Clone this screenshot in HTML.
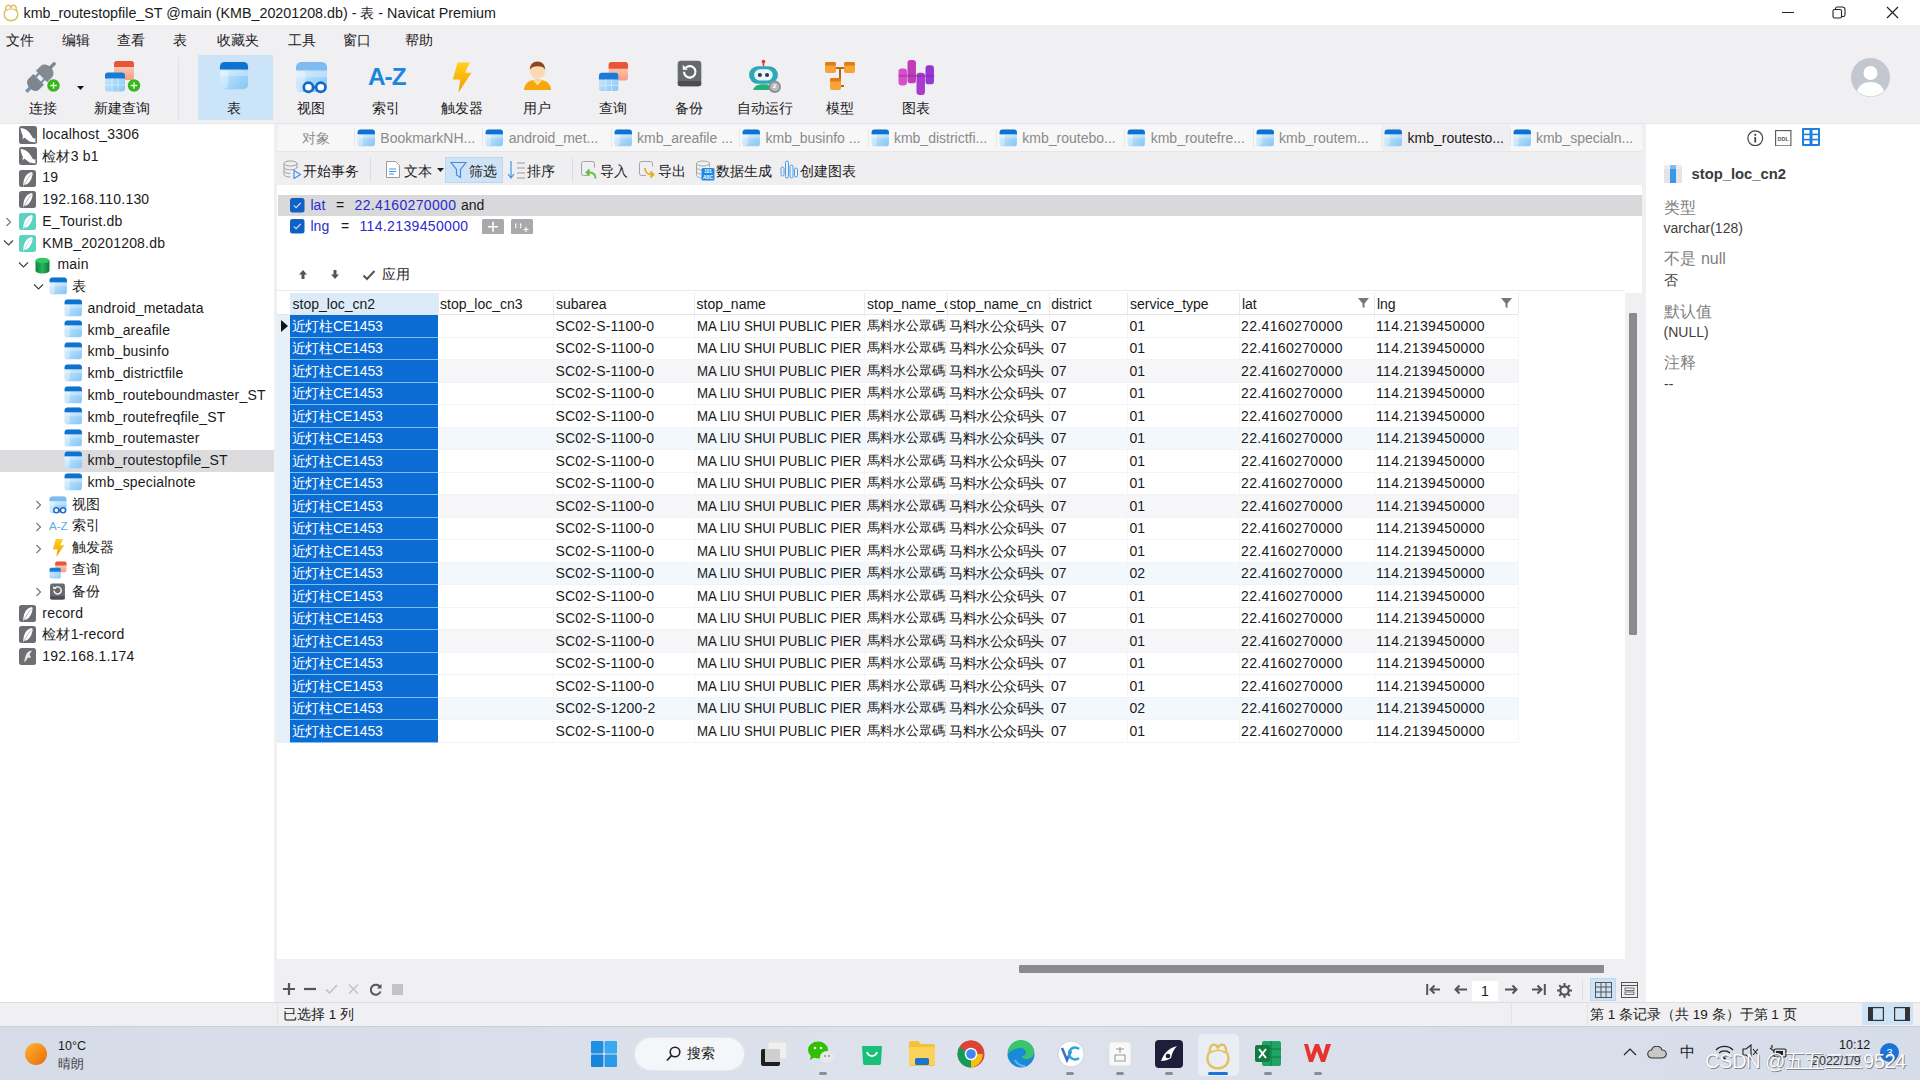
<!DOCTYPE html><html><head><meta charset="utf-8"><title>Navicat</title><style>
html,body{margin:0;padding:0;width:1920px;height:1080px;overflow:hidden;background:#fff}
body{position:relative;font-family:"Liberation Sans",sans-serif}
.t{position:absolute;white-space:nowrap;line-height:1.2}
.b{position:absolute}
</style></head><body><svg width="0" height="0" style="position:absolute"><defs>
<linearGradient id="tgb" x1="0" y1="0" x2="1" y2="1"><stop offset="0" stop-color="#d3edfd"/><stop offset="1" stop-color="#86c6f7"/></linearGradient>
<linearGradient id="tgr" x1="0" y1="0" x2="0" y2="1"><stop offset="0" stop-color="#ffd9c8"/><stop offset="1" stop-color="#f59d80"/></linearGradient>
<linearGradient id="gdb" x1="0" y1="0" x2="1" y2="0"><stop offset="0" stop-color="#0d8a3c"/><stop offset=".5" stop-color="#27b35a"/><stop offset="1" stop-color="#0c7a35"/></linearGradient>
<linearGradient id="bolt" x1="0" y1="0" x2="0" y2="1"><stop offset="0" stop-color="#ffd21a"/><stop offset="1" stop-color="#f59a00"/></linearGradient>
<linearGradient id="sun" x1="0" y1="0" x2="1" y2="1"><stop offset="0" stop-color="#ffb52e"/><stop offset="1" stop-color="#e86a0a"/></linearGradient>
<linearGradient id="tbar" x1="0" y1="0" x2="1" y2="0"><stop offset="0" stop-color="#d8dfec"/><stop offset=".5" stop-color="#dde3ee"/><stop offset="1" stop-color="#d6dde9"/></linearGradient>
</defs></svg><div class="b" style="left:0px;top:0px;width:1920px;height:25px;background:#ffffff;"></div>
<svg class="b" style="left:2px;top:1px" width="18" height="21" viewBox="0 0 18 21"><path d="M9 19.6C5 19.6 2.2 16.9 2.2 13.3C2.2 11.3 2.9 9.7 3.9 8.6C3.4 6.5 4.4 4.5 6.3 4.3C7.8 4.2 8.7 5.4 9 6.7C9.3 5.4 10.2 4.2 11.7 4.3C13.6 4.5 14.6 6.5 14.1 8.6C15.1 9.7 15.8 11.3 15.8 13.3C15.8 16.9 13 19.6 9 19.6Z" fill="none" stroke="#e0c068" stroke-width="1.6"/><path d="M4.2 9.5C5.8 8.3 7.3 7.9 9 7.9S12.2 8.3 13.8 9.5" fill="none" stroke="#e0c068" stroke-width="1.2"/></svg>
<div class="t" style="left:23.5px;top:5px;font-size:14.3px;color:#1a1a1a;">kmb_routestopfile_ST @main (KMB_20201208.db) - 表 - Navicat Premium</div>
<div class="b" style="left:1782px;top:12px;width:11.5px;height:1.2px;background:#222;"></div>
<svg class="b" style="left:1832px;top:6px" width="14" height="13" viewBox="0 0 14 13"><rect x="1" y="3.5" width="8.5" height="8.5" rx="1.5" fill="none" stroke="#222" stroke-width="1.1"/><path d="M3.5 3.3V2.8A1.8 1.8 0 0 1 5.3 1h5.2A2.5 2.5 0 0 1 13 3.5v5.2a1.8 1.8 0 0 1-1.8 1.8H10" fill="none" stroke="#222" stroke-width="1.1"/></svg>
<svg class="b" style="left:1886px;top:6px" width="13" height="13" viewBox="0 0 13 13"><path d="M1 1L12 12M12 1L1 12" stroke="#222" stroke-width="1.2"/></svg>
<div class="b" style="left:0px;top:25px;width:1920px;height:98.6px;background:#f0eff2;"></div>
<div class="t" style="left:6px;top:32.5px;font-size:13.5px;color:#1a1a1a;">文件</div>
<div class="t" style="left:61.5px;top:32.5px;font-size:13.5px;color:#1a1a1a;">编辑</div>
<div class="t" style="left:116.5px;top:32.5px;font-size:13.5px;color:#1a1a1a;">查看</div>
<div class="t" style="left:173px;top:32.5px;font-size:13.5px;color:#1a1a1a;">表</div>
<div class="t" style="left:216.5px;top:32.5px;font-size:13.5px;color:#1a1a1a;">收藏夹</div>
<div class="t" style="left:288px;top:32.5px;font-size:13.5px;color:#1a1a1a;">工具</div>
<div class="t" style="left:343px;top:32.5px;font-size:13.5px;color:#1a1a1a;">窗口</div>
<div class="t" style="left:405px;top:32.5px;font-size:13.5px;color:#1a1a1a;">帮助</div>
<div class="b" style="left:197.5px;top:55px;width:75px;height:65px;background:#cce4f7;"></div>
<div class="b" style="left:178px;top:57px;width:1px;height:63px;background:#e2e1e5;"></div>
<div class="b" style="left:0px;top:122.6px;width:1920px;height:1px;background:#e6e6e9;"></div>
<div class="t" style="left:28.7px;top:100.5px;font-size:13.5px;color:#1a1a1a;">连接</div>
<div class="t" style="left:94.2px;top:100.5px;font-size:13.5px;color:#1a1a1a;">新建查询</div>
<div class="t" style="left:227.2px;top:100.5px;font-size:13.5px;color:#1a1a1a;">表</div>
<div class="t" style="left:296.7px;top:100.5px;font-size:13.5px;color:#1a1a1a;">视图</div>
<div class="t" style="left:372.2px;top:100.5px;font-size:13.5px;color:#1a1a1a;">索引</div>
<div class="t" style="left:441.2px;top:100.5px;font-size:13.5px;color:#1a1a1a;">触发器</div>
<div class="t" style="left:522.7px;top:100.5px;font-size:13.5px;color:#1a1a1a;">用户</div>
<div class="t" style="left:599.2px;top:100.5px;font-size:13.5px;color:#1a1a1a;">查询</div>
<div class="t" style="left:674.7px;top:100.5px;font-size:13.5px;color:#1a1a1a;">备份</div>
<div class="t" style="left:737.2px;top:100.5px;font-size:13.5px;color:#1a1a1a;">自动运行</div>
<div class="t" style="left:826.2px;top:100.5px;font-size:13.5px;color:#1a1a1a;">模型</div>
<div class="t" style="left:902.2px;top:100.5px;font-size:13.5px;color:#1a1a1a;">图表</div>
<svg class="b" style="left:22px;top:56px" width="40" height="40" viewBox="0 0 40 40"><g transform="rotate(-45 19.5 20.5)"><rect x="-2" y="18.8" width="8" height="3.4" fill="#6a9bb8"/><path d="M8 13h7.5v15H8a5 7.5 0 0 1 0-15z" fill="#80848c"/><rect x="15" y="15.3" width="5" height="2.4" fill="#6a9bb8"/><rect x="15" y="23.3" width="5" height="2.4" fill="#6a9bb8"/><path d="M19.5 12.5h7a6 8 0 0 1 0 16h-7z" fill="#858991"/><rect x="31" y="18.8" width="8" height="3.4" rx="1" fill="#80848c"/></g><circle cx="31.5" cy="29.5" r="6.2" fill="#36b51e"/><path d="M28.2 29.5h6.6M31.5 26.2v6.6" stroke="#dfffd0" stroke-width="1.4"/></svg>
<svg class="b" style="left:77px;top:86px" width="7" height="4" viewBox="0 0 7 4"><path d="M0 0h7L3.5 4z" fill="#111"/></svg>
<svg class="b" style="left:104px;top:60px" width="38" height="34" viewBox="0 0 38 34"><rect x="10" y="1" width="20" height="19" rx="3" fill="url(#tgr)"/><path d="M10 7V4a3 3 0 0 1 3-3h14a3 3 0 0 1 3 3v3z" fill="#e8553a"/><rect x="1" y="12.5" width="20" height="19" rx="3" fill="url(#tgb)"/><path d="M1 18.5v-3a3 3 0 0 1 3-3h14a3 3 0 0 1 3 3v3z" fill="#1a7bd6"/><path d="M1 25H21M8 18V31.5M14 18V31.5" stroke="#fff" stroke-opacity=".45"/><circle cx="30" cy="25.5" r="6.2" fill="#36b51e"/><path d="M26.7 25.5h6.6M30 22.2v6.6" stroke="#dfffd0" stroke-width="1.4"/></svg>
<svg class="b" style="left:219px;top:61px" width="30" height="30" viewBox="0 0 32 32"><rect x="1" y="1" width="30" height="29" rx="5" fill="url(#tgb)"/><path d="M1 16V10H31V16z" fill="#ffffff" fill-opacity=".28"/><path d="M1 10H10V25a5 5 0 0 1-4 4.5A5 5 0 0 1 1 25z" fill="#ffffff" fill-opacity=".35"/><path d="M1 9V6a5 5 0 0 1 5-5h20a5 5 0 0 1 5 5v3z" fill="#0f72cf"/></svg>
<svg class="b" style="left:295px;top:61px" width="33" height="33" viewBox="0 0 32 32"><rect x="1" y="1" width="30" height="29" rx="5" fill="url(#tgb)"/><path d="M1 16V10H31V16z" fill="#ffffff" fill-opacity=".28"/><path d="M1 10H10V25a5 5 0 0 1-4 4.5A5 5 0 0 1 1 25z" fill="#ffffff" fill-opacity=".35"/><path d="M1 9V6a5 5 0 0 1 5-5h20a5 5 0 0 1 5 5v3z" fill="#7fbaf0"/><circle cx="13" cy="25.5" r="4.5" fill="#fff" stroke="#1569c7" stroke-width="2.6"/><circle cx="25" cy="25.5" r="4.5" fill="#fff" stroke="#1569c7" stroke-width="2.6"/><path d="M17.5 25.5h3" stroke="#1569c7" stroke-width="2.6"/></svg>
<div class="t" style="left:368px;top:67px;font-size:24.3px;line-height:19px;color:#1b86df;font-weight:bold;letter-spacing:-1px">A-Z</div>
<svg class="b" style="left:450px;top:61.5px" width="22.5" height="31" viewBox="0 0 24 32"><path d="M8 0H21L16 11H23L9 32L11 18H3Z" fill="url(#bolt)"/></svg>
<svg class="b" style="left:522px;top:60px" width="31" height="31" viewBox="0 0 32 32"><path d="M2 31c0-7 6-11 14-11s14 4 14 11z" fill="#f5a70c"/><path d="M11 21l5 5 5-5" fill="#ffe0a0"/><circle cx="16" cy="11" r="8" fill="#fcd9b6"/><path d="M8 10c0-5 3.5-8.5 8-8.5s8 3.5 8 8.5c-1.5-2.5-4-3.5-8-3.5-3.5 0-6 1-8 3.5z" fill="#8a4a1c"/></svg>
<svg class="b" style="left:598px;top:61px" width="31" height="31" viewBox="0 0 32 32"><rect x="11" y="1" width="20" height="19" rx="3" fill="url(#tgr)"/><path d="M11 8V4a3 3 0 0 1 3-3h14a3 3 0 0 1 3 3v4z" fill="#e8553a"/><rect x="1" y="12" width="20" height="19" rx="3" fill="url(#tgb)"/><path d="M1 19v-4a3 3 0 0 1 3-3h14a3 3 0 0 1 3 3v4z" fill="#1a7bd6"/><path d="M1 25H21M8 19V31M14 19V31" stroke="#fff" stroke-opacity=".45" stroke-width="1"/></svg>
<svg class="b" style="left:676px;top:60px" width="27" height="27" viewBox="0 0 32 32"><rect x="2" y="1" width="28" height="30" rx="4" fill="#66696e"/><rect x="2" y="25" width="28" height="6" rx="3" fill="#4b4d52"/><path d="M9.5 14a6.8 6.8 0 1 0 2.2-5" stroke="#fff" stroke-width="2.6" fill="none"/><path d="M8 5.5v6h6z" fill="#fff"/></svg>
<svg class="b" style="left:747px;top:59px" width="35" height="35" viewBox="0 0 34 34"><path d="M16 2v5" stroke="#d9353a" stroke-width="1.5"/><circle cx="16" cy="2.5" r="1.8" fill="#e53935"/><rect x="2" y="7" width="28" height="17" rx="8.5" fill="#2fa7b9"/><rect x="7" y="10" width="18" height="11" rx="5.5" fill="#e8f6f8"/><circle cx="12.5" cy="15.5" r="2" fill="#2b3a55"/><circle cx="19.5" cy="15.5" r="2" fill="#2b3a55"/><path d="M6 30c1-4 5-5.5 10-5.5s9 1.5 10 5.5z" fill="#21b07a"/><circle cx="27" cy="27" r="6" fill="#8d9096"/><circle cx="27" cy="27" r="4.2" fill="#b9bcc1"/><path d="M27 24.5v3h-2" stroke="#fff" stroke-width="1.3" fill="none"/></svg>
<svg class="b" style="left:824px;top:60px" width="32" height="32" viewBox="0 0 32 32"><path d="M10 8h10M16 8v18h4" stroke="#b8661a" stroke-width="2" fill="none"/><rect x="1" y="2" width="11" height="11" rx="2" fill="#f7a33a"/><rect x="1" y="2" width="11" height="3.5" rx="1.5" fill="#e07b12"/><rect x="20" y="2" width="11" height="11" rx="2" fill="#f7a33a"/><rect x="20" y="2" width="11" height="3.5" rx="1.5" fill="#e07b12"/><rect x="6" y="18" width="11" height="12" rx="2" fill="#f7a33a"/><rect x="6" y="18" width="11" height="3.5" rx="1.5" fill="#e07b12"/></svg>
<svg class="b" style="left:897px;top:59px" width="39" height="37" viewBox="0 0 36 35"><rect x="1" y="9" width="8" height="16" rx="3" fill="#d94fc8"/><rect x="9.5" y="1" width="8" height="22" rx="3" fill="#c13cb7"/><rect x="18" y="13" width="8" height="21" rx="3" fill="#a93ad0"/><rect x="26.5" y="6" width="8" height="18" rx="3" fill="#9636d6"/><path d="M1 16h34" stroke="#7a1f9c" stroke-opacity=".35" stroke-width="2"/></svg>
<svg class="b" style="left:1851px;top:58px" width="39" height="39" viewBox="0 0 39 39"><circle cx="19.5" cy="19.5" r="19.5" fill="#c3c7cf"/><circle cx="19.5" cy="15" r="7" fill="#fff"/><path d="M6 33c2-6 7-9 13.5-9s11.5 3 13.5 9a19.5 19.5 0 0 1-27 0z" fill="#fff"/></svg>
<div class="b" style="left:0px;top:123.6px;width:274px;height:878.4px;background:#ffffff;"></div>
<div class="b" style="left:274px;top:123.6px;width:3px;height:878.4px;background:#f0eff2;"></div>
<svg class="b" style="left:19px;top:125.5px" width="18" height="18" viewBox="0 0 18 18"><rect x="0" y="0" width="18" height="18" rx="2.5" fill="#6d6d71"/><path d="M1.5 2C5.5 2.3 9.5 4.6 11.6 8.2C12.6 10 13.6 11.8 15 12.6L17 12.4L16 14.2L17 16C14.2 16.5 11.5 16.2 9.4 14.8C7.8 13.7 6.6 12.4 5.4 11.6L3.6 13.4L3.8 9.6C2.6 7.4 1.8 4.8 1.5 2Z" fill="#ffffff"/></svg>
<div class="t" style="left:42.3px;top:125.8px;font-size:14px;color:#1a1a1a;letter-spacing:0.2px">localhost_3306</div>
<svg class="b" style="left:19px;top:147.26px" width="18" height="18" viewBox="0 0 18 18"><rect x="0" y="0" width="18" height="18" rx="2.5" fill="#6d6d71"/><path d="M1.5 2C5.5 2.3 9.5 4.6 11.6 8.2C12.6 10 13.6 11.8 15 12.6L17 12.4L16 14.2L17 16C14.2 16.5 11.5 16.2 9.4 14.8C7.8 13.7 6.6 12.4 5.4 11.6L3.6 13.4L3.8 9.6C2.6 7.4 1.8 4.8 1.5 2Z" fill="#ffffff"/></svg>
<div class="t" style="left:42.3px;top:147.55999999999997px;font-size:14px;color:#1a1a1a;letter-spacing:0.2px">检材3 b1</div>
<svg class="b" style="left:19px;top:169.52px" width="17" height="17" viewBox="0 0 17 17"><rect x="0" y="0" width="17" height="17" rx="2.5" fill="#6d6d71"/><path d="M4.6 16.8C3.8 12.5 5 7.2 8.8 3.8C10.4 2.4 12.4 1.9 13.4 2.4C14 4.5 12.8 9 10.2 12.2C8.7 14 6.8 14.8 5.2 15.1Z" fill="#ffffff"/><path d="M5 15.8C6.8 11 9.2 7.2 12.4 4" stroke="#6d6d71" stroke-width=".8" stroke-opacity=".6" fill="none"/></svg>
<div class="t" style="left:42.3px;top:169.32px;font-size:14px;color:#1a1a1a;letter-spacing:0.2px">19</div>
<svg class="b" style="left:19px;top:191.28px" width="17" height="17" viewBox="0 0 17 17"><rect x="0" y="0" width="17" height="17" rx="2.5" fill="#6d6d71"/><path d="M4.6 16.8C3.8 12.5 5 7.2 8.8 3.8C10.4 2.4 12.4 1.9 13.4 2.4C14 4.5 12.8 9 10.2 12.2C8.7 14 6.8 14.8 5.2 15.1Z" fill="#ffffff"/><path d="M5 15.8C6.8 11 9.2 7.2 12.4 4" stroke="#6d6d71" stroke-width=".8" stroke-opacity=".6" fill="none"/></svg>
<div class="t" style="left:42.3px;top:191.07999999999998px;font-size:14px;color:#1a1a1a;letter-spacing:0.2px">192.168.110.130</div>
<svg class="b" style="left:19px;top:213.04px" width="17" height="17" viewBox="0 0 17 17"><rect x="0" y="0" width="17" height="17" rx="2.5" fill="#5cd2c0"/><path d="M4.6 16.8C3.8 12.5 5 7.2 8.8 3.8C10.4 2.4 12.4 1.9 13.4 2.4C14 4.5 12.8 9 10.2 12.2C8.7 14 6.8 14.8 5.2 15.1Z" fill="#ffffff"/><path d="M5 15.8C6.8 11 9.2 7.2 12.4 4" stroke="#5cd2c0" stroke-width=".8" stroke-opacity=".6" fill="none"/></svg>
<svg class="b" style="left:4px;top:217.14px" width="9" height="10" viewBox="0 0 9 10"><path d="M2.5 1l4 4-4 4" stroke="#7a7a7a" stroke-width="1.2" fill="none"/></svg>
<div class="t" style="left:42.3px;top:212.83999999999997px;font-size:14px;color:#1a1a1a;letter-spacing:0.2px">E_Tourist.db</div>
<svg class="b" style="left:19px;top:234.8px" width="17" height="17" viewBox="0 0 17 17"><rect x="0" y="0" width="17" height="17" rx="2.5" fill="#5cd2c0"/><path d="M4.6 16.8C3.8 12.5 5 7.2 8.8 3.8C10.4 2.4 12.4 1.9 13.4 2.4C14 4.5 12.8 9 10.2 12.2C8.7 14 6.8 14.8 5.2 15.1Z" fill="#ffffff"/><path d="M5 15.8C6.8 11 9.2 7.2 12.4 4" stroke="#5cd2c0" stroke-width=".8" stroke-opacity=".6" fill="none"/></svg>
<svg class="b" style="left:3px;top:239.4px" width="11" height="8" viewBox="0 0 11 8"><path d="M1 1.5l4.5 4.5 4.5-4.5" stroke="#444" stroke-width="1.2" fill="none"/></svg>
<div class="t" style="left:42.3px;top:234.6px;font-size:14px;color:#1a1a1a;letter-spacing:0.2px">KMB_20201208.db</div>
<svg class="b" style="left:34px;top:256.56px" width="17" height="17" viewBox="0 0 17 17"><path d="M1.5 3.5v10c0 1.7 3.1 3 7 3s7-1.3 7-3v-10z" fill="url(#gdb)"/><ellipse cx="8.5" cy="3.5" rx="7" ry="2.8" fill="#34c46a"/></svg>
<svg class="b" style="left:18px;top:261.15999999999997px" width="11" height="8" viewBox="0 0 11 8"><path d="M1 1.5l4.5 4.5 4.5-4.5" stroke="#444" stroke-width="1.2" fill="none"/></svg>
<div class="t" style="left:57.5px;top:256.36px;font-size:14px;color:#1a1a1a;letter-spacing:0.2px">main</div>
<svg class="b" style="left:48.5px;top:276.82px" width="18.5" height="18.5" viewBox="0 0 32 32"><rect x="1" y="1" width="30" height="29" rx="5" fill="url(#tgb)"/><path d="M1 16V10H31V16z" fill="#ffffff" fill-opacity=".28"/><path d="M1 10H10V25a5 5 0 0 1-4 4.5A5 5 0 0 1 1 25z" fill="#ffffff" fill-opacity=".35"/><path d="M1 9V6a5 5 0 0 1 5-5h20a5 5 0 0 1 5 5v3z" fill="#0f72cf"/></svg>
<svg class="b" style="left:33px;top:282.92px" width="11" height="8" viewBox="0 0 11 8"><path d="M1 1.5l4.5 4.5 4.5-4.5" stroke="#444" stroke-width="1.2" fill="none"/></svg>
<div class="t" style="left:72px;top:278.12px;font-size:14px;color:#1a1a1a;letter-spacing:0.2px">表</div>
<svg class="b" style="left:63.8px;top:298.58px" width="18.5" height="18.5" viewBox="0 0 32 32"><rect x="1" y="1" width="30" height="29" rx="5" fill="url(#tgb)"/><path d="M1 16V10H31V16z" fill="#ffffff" fill-opacity=".28"/><path d="M1 10H10V25a5 5 0 0 1-4 4.5A5 5 0 0 1 1 25z" fill="#ffffff" fill-opacity=".35"/><path d="M1 9V6a5 5 0 0 1 5-5h20a5 5 0 0 1 5 5v3z" fill="#0f72cf"/></svg>
<div class="t" style="left:87.6px;top:299.88px;font-size:14px;color:#1a1a1a;letter-spacing:0.2px">android_metadata</div>
<svg class="b" style="left:63.8px;top:320.34px" width="18.5" height="18.5" viewBox="0 0 32 32"><rect x="1" y="1" width="30" height="29" rx="5" fill="url(#tgb)"/><path d="M1 16V10H31V16z" fill="#ffffff" fill-opacity=".28"/><path d="M1 10H10V25a5 5 0 0 1-4 4.5A5 5 0 0 1 1 25z" fill="#ffffff" fill-opacity=".35"/><path d="M1 9V6a5 5 0 0 1 5-5h20a5 5 0 0 1 5 5v3z" fill="#0f72cf"/></svg>
<div class="t" style="left:87.6px;top:321.64px;font-size:14px;color:#1a1a1a;letter-spacing:0.2px">kmb_areafile</div>
<svg class="b" style="left:63.8px;top:342.1px" width="18.5" height="18.5" viewBox="0 0 32 32"><rect x="1" y="1" width="30" height="29" rx="5" fill="url(#tgb)"/><path d="M1 16V10H31V16z" fill="#ffffff" fill-opacity=".28"/><path d="M1 10H10V25a5 5 0 0 1-4 4.5A5 5 0 0 1 1 25z" fill="#ffffff" fill-opacity=".35"/><path d="M1 9V6a5 5 0 0 1 5-5h20a5 5 0 0 1 5 5v3z" fill="#0f72cf"/></svg>
<div class="t" style="left:87.6px;top:343.40000000000003px;font-size:14px;color:#1a1a1a;letter-spacing:0.2px">kmb_businfo</div>
<svg class="b" style="left:63.8px;top:363.86px" width="18.5" height="18.5" viewBox="0 0 32 32"><rect x="1" y="1" width="30" height="29" rx="5" fill="url(#tgb)"/><path d="M1 16V10H31V16z" fill="#ffffff" fill-opacity=".28"/><path d="M1 10H10V25a5 5 0 0 1-4 4.5A5 5 0 0 1 1 25z" fill="#ffffff" fill-opacity=".35"/><path d="M1 9V6a5 5 0 0 1 5-5h20a5 5 0 0 1 5 5v3z" fill="#0f72cf"/></svg>
<div class="t" style="left:87.6px;top:365.16px;font-size:14px;color:#1a1a1a;letter-spacing:0.2px">kmb_districtfile</div>
<svg class="b" style="left:63.8px;top:385.62px" width="18.5" height="18.5" viewBox="0 0 32 32"><rect x="1" y="1" width="30" height="29" rx="5" fill="url(#tgb)"/><path d="M1 16V10H31V16z" fill="#ffffff" fill-opacity=".28"/><path d="M1 10H10V25a5 5 0 0 1-4 4.5A5 5 0 0 1 1 25z" fill="#ffffff" fill-opacity=".35"/><path d="M1 9V6a5 5 0 0 1 5-5h20a5 5 0 0 1 5 5v3z" fill="#0f72cf"/></svg>
<div class="t" style="left:87.6px;top:386.92px;font-size:14px;color:#1a1a1a;letter-spacing:0.2px">kmb_routeboundmaster_ST</div>
<svg class="b" style="left:63.8px;top:407.38px" width="18.5" height="18.5" viewBox="0 0 32 32"><rect x="1" y="1" width="30" height="29" rx="5" fill="url(#tgb)"/><path d="M1 16V10H31V16z" fill="#ffffff" fill-opacity=".28"/><path d="M1 10H10V25a5 5 0 0 1-4 4.5A5 5 0 0 1 1 25z" fill="#ffffff" fill-opacity=".35"/><path d="M1 9V6a5 5 0 0 1 5-5h20a5 5 0 0 1 5 5v3z" fill="#0f72cf"/></svg>
<div class="t" style="left:87.6px;top:408.68px;font-size:14px;color:#1a1a1a;letter-spacing:0.2px">kmb_routefreqfile_ST</div>
<svg class="b" style="left:63.8px;top:429.14px" width="18.5" height="18.5" viewBox="0 0 32 32"><rect x="1" y="1" width="30" height="29" rx="5" fill="url(#tgb)"/><path d="M1 16V10H31V16z" fill="#ffffff" fill-opacity=".28"/><path d="M1 10H10V25a5 5 0 0 1-4 4.5A5 5 0 0 1 1 25z" fill="#ffffff" fill-opacity=".35"/><path d="M1 9V6a5 5 0 0 1 5-5h20a5 5 0 0 1 5 5v3z" fill="#0f72cf"/></svg>
<div class="t" style="left:87.6px;top:430.44px;font-size:14px;color:#1a1a1a;letter-spacing:0.2px">kmb_routemaster</div>
<div class="b" style="left:0px;top:450.0px;width:274px;height:21.76px;background:#dcdcde;"></div>
<svg class="b" style="left:63.8px;top:450.9px" width="18.5" height="18.5" viewBox="0 0 32 32"><rect x="1" y="1" width="30" height="29" rx="5" fill="url(#tgb)"/><path d="M1 16V10H31V16z" fill="#ffffff" fill-opacity=".28"/><path d="M1 10H10V25a5 5 0 0 1-4 4.5A5 5 0 0 1 1 25z" fill="#ffffff" fill-opacity=".35"/><path d="M1 9V6a5 5 0 0 1 5-5h20a5 5 0 0 1 5 5v3z" fill="#0f72cf"/></svg>
<div class="t" style="left:87.6px;top:452.2px;font-size:14px;color:#1a1a1a;letter-spacing:0.2px">kmb_routestopfile_ST</div>
<svg class="b" style="left:63.8px;top:472.65999999999997px" width="18.5" height="18.5" viewBox="0 0 32 32"><rect x="1" y="1" width="30" height="29" rx="5" fill="url(#tgb)"/><path d="M1 16V10H31V16z" fill="#ffffff" fill-opacity=".28"/><path d="M1 10H10V25a5 5 0 0 1-4 4.5A5 5 0 0 1 1 25z" fill="#ffffff" fill-opacity=".35"/><path d="M1 9V6a5 5 0 0 1 5-5h20a5 5 0 0 1 5 5v3z" fill="#0f72cf"/></svg>
<div class="t" style="left:87.6px;top:473.96px;font-size:14px;color:#1a1a1a;letter-spacing:0.2px">kmb_specialnote</div>
<svg class="b" style="left:49px;top:495.91999999999996px" width="18" height="18" viewBox="0 0 32 32"><rect x="1" y="1" width="30" height="29" rx="5" fill="url(#tgb)"/><path d="M1 16V10H31V16z" fill="#ffffff" fill-opacity=".28"/><path d="M1 10H10V25a5 5 0 0 1-4 4.5A5 5 0 0 1 1 25z" fill="#ffffff" fill-opacity=".35"/><path d="M1 9V6a5 5 0 0 1 5-5h20a5 5 0 0 1 5 5v3z" fill="#7fbaf0"/><circle cx="13" cy="25.5" r="4.5" fill="#fff" stroke="#1569c7" stroke-width="2.6"/><circle cx="25" cy="25.5" r="4.5" fill="#fff" stroke="#1569c7" stroke-width="2.6"/><path d="M17.5 25.5h3" stroke="#1569c7" stroke-width="2.6"/></svg>
<svg class="b" style="left:34px;top:500.02px" width="9" height="10" viewBox="0 0 9 10"><path d="M2.5 1l4 4-4 4" stroke="#7a7a7a" stroke-width="1.2" fill="none"/></svg>
<div class="t" style="left:72px;top:495.71999999999997px;font-size:14px;color:#1a1a1a;letter-spacing:0.2px">视图</div>
<div class="t" style="left:49px;top:519.68px;font-size:11.5px;line-height:13px;color:#5aaae8">A-Z</div>
<svg class="b" style="left:34px;top:521.78px" width="9" height="10" viewBox="0 0 9 10"><path d="M2.5 1l4 4-4 4" stroke="#7a7a7a" stroke-width="1.2" fill="none"/></svg>
<div class="t" style="left:72px;top:517.48px;font-size:14px;color:#1a1a1a;letter-spacing:0.2px">索引</div>
<svg class="b" style="left:51px;top:538.94px" width="14" height="18" viewBox="0 0 24 32"><path d="M8 0H21L16 11H23L9 32L11 18H3Z" fill="url(#bolt)"/></svg>
<svg class="b" style="left:34px;top:543.5400000000001px" width="9" height="10" viewBox="0 0 9 10"><path d="M2.5 1l4 4-4 4" stroke="#7a7a7a" stroke-width="1.2" fill="none"/></svg>
<div class="t" style="left:72px;top:539.2400000000001px;font-size:14px;color:#1a1a1a;letter-spacing:0.2px">触发器</div>
<svg class="b" style="left:49px;top:561.2px" width="18" height="18" viewBox="0 0 32 32"><rect x="11" y="1" width="20" height="19" rx="3" fill="url(#tgr)"/><path d="M11 8V4a3 3 0 0 1 3-3h14a3 3 0 0 1 3 3v4z" fill="#e8553a"/><rect x="1" y="12" width="20" height="19" rx="3" fill="url(#tgb)"/><path d="M1 19v-4a3 3 0 0 1 3-3h14a3 3 0 0 1 3 3v4z" fill="#1a7bd6"/><path d="M1 25H21M8 19V31M14 19V31" stroke="#fff" stroke-opacity=".45" stroke-width="1"/></svg>
<div class="t" style="left:72px;top:561.0000000000001px;font-size:14px;color:#1a1a1a;letter-spacing:0.2px">查询</div>
<svg class="b" style="left:49px;top:582.96px" width="17" height="17" viewBox="0 0 32 32"><rect x="2" y="1" width="28" height="30" rx="4" fill="#66696e"/><rect x="2" y="25" width="28" height="6" rx="3" fill="#4b4d52"/><path d="M9.5 14a6.8 6.8 0 1 0 2.2-5" stroke="#fff" stroke-width="2.6" fill="none"/><path d="M8 5.5v6h6z" fill="#fff"/></svg>
<svg class="b" style="left:34px;top:587.0600000000001px" width="9" height="10" viewBox="0 0 9 10"><path d="M2.5 1l4 4-4 4" stroke="#7a7a7a" stroke-width="1.2" fill="none"/></svg>
<div class="t" style="left:72px;top:582.7600000000001px;font-size:14px;color:#1a1a1a;letter-spacing:0.2px">备份</div>
<svg class="b" style="left:19px;top:604.72px" width="17" height="17" viewBox="0 0 17 17"><rect x="0" y="0" width="17" height="17" rx="2.5" fill="#6d6d71"/><path d="M4.6 16.8C3.8 12.5 5 7.2 8.8 3.8C10.4 2.4 12.4 1.9 13.4 2.4C14 4.5 12.8 9 10.2 12.2C8.7 14 6.8 14.8 5.2 15.1Z" fill="#ffffff"/><path d="M5 15.8C6.8 11 9.2 7.2 12.4 4" stroke="#6d6d71" stroke-width=".8" stroke-opacity=".6" fill="none"/></svg>
<div class="t" style="left:42.3px;top:604.5200000000001px;font-size:14px;color:#1a1a1a;letter-spacing:0.2px">record</div>
<svg class="b" style="left:19px;top:626.48px" width="17" height="17" viewBox="0 0 17 17"><rect x="0" y="0" width="17" height="17" rx="2.5" fill="#6d6d71"/><path d="M4.6 16.8C3.8 12.5 5 7.2 8.8 3.8C10.4 2.4 12.4 1.9 13.4 2.4C14 4.5 12.8 9 10.2 12.2C8.7 14 6.8 14.8 5.2 15.1Z" fill="#ffffff"/><path d="M5 15.8C6.8 11 9.2 7.2 12.4 4" stroke="#6d6d71" stroke-width=".8" stroke-opacity=".6" fill="none"/></svg>
<div class="t" style="left:42.3px;top:626.2800000000001px;font-size:14px;color:#1a1a1a;letter-spacing:0.2px">检材1-record</div>
<svg class="b" style="left:19px;top:648.24px" width="17" height="17" viewBox="0 0 17 17"><rect x="0" y="0" width="17" height="17" rx="2.5" fill="#6f6f73"/><path d="M5 14c1-3 1-6 3-9 1.5-2 4-2.5 5-2-1 1-2 2-2.5 4 1 .5 1.5 1.5 1 3-1.5-1-3-.5-3.5 1-.5 1.2-1 2.2-3 3z" fill="#e8e8e8"/></svg>
<div class="t" style="left:42.3px;top:648.0400000000001px;font-size:14px;color:#1a1a1a;letter-spacing:0.2px">192.168.1.174</div>
<div class="b" style="left:277px;top:123.6px;width:1368px;height:28px;background:#f0eff2;"></div>
<div class="b" style="left:278px;top:124.5px;width:1364px;height:26.5px;background:#f7f7f8;"></div>
<div class="t" style="left:302px;top:130.5px;font-size:13.5px;color:#8c8c8c;">对象</div>
<div class="b" style="left:354.0px;top:128px;width:1px;height:19px;background:#e8e8ea;"></div>
<svg class="b" style="left:357.0px;top:128.5px" width="18.5" height="18.5" viewBox="0 0 32 32"><rect x="1" y="1" width="30" height="29" rx="5" fill="url(#tgb)"/><path d="M1 16V10H31V16z" fill="#ffffff" fill-opacity=".28"/><path d="M1 10H10V25a5 5 0 0 1-4 4.5A5 5 0 0 1 1 25z" fill="#ffffff" fill-opacity=".35"/><path d="M1 9V6a5 5 0 0 1 5-5h20a5 5 0 0 1 5 5v3z" fill="#0f72cf"/></svg>
<div class="t" style="left:380.3px;top:129.5px;font-size:14px;color:#8a8a8a;letter-spacing:0px">BookmarkNH...</div>
<div class="b" style="left:482.4px;top:128px;width:1px;height:19px;background:#e8e8ea;"></div>
<svg class="b" style="left:485.4px;top:128.5px" width="18.5" height="18.5" viewBox="0 0 32 32"><rect x="1" y="1" width="30" height="29" rx="5" fill="url(#tgb)"/><path d="M1 16V10H31V16z" fill="#ffffff" fill-opacity=".28"/><path d="M1 10H10V25a5 5 0 0 1-4 4.5A5 5 0 0 1 1 25z" fill="#ffffff" fill-opacity=".35"/><path d="M1 9V6a5 5 0 0 1 5-5h20a5 5 0 0 1 5 5v3z" fill="#0f72cf"/></svg>
<div class="t" style="left:508.7px;top:129.5px;font-size:14px;color:#8a8a8a;letter-spacing:0px">android_met...</div>
<div class="b" style="left:610.8px;top:128px;width:1px;height:19px;background:#e8e8ea;"></div>
<svg class="b" style="left:613.8px;top:128.5px" width="18.5" height="18.5" viewBox="0 0 32 32"><rect x="1" y="1" width="30" height="29" rx="5" fill="url(#tgb)"/><path d="M1 16V10H31V16z" fill="#ffffff" fill-opacity=".28"/><path d="M1 10H10V25a5 5 0 0 1-4 4.5A5 5 0 0 1 1 25z" fill="#ffffff" fill-opacity=".35"/><path d="M1 9V6a5 5 0 0 1 5-5h20a5 5 0 0 1 5 5v3z" fill="#0f72cf"/></svg>
<div class="t" style="left:637.0999999999999px;top:129.5px;font-size:14px;color:#8a8a8a;letter-spacing:0px">kmb_areafile ...</div>
<div class="b" style="left:739.2px;top:128px;width:1px;height:19px;background:#e8e8ea;"></div>
<svg class="b" style="left:742.2px;top:128.5px" width="18.5" height="18.5" viewBox="0 0 32 32"><rect x="1" y="1" width="30" height="29" rx="5" fill="url(#tgb)"/><path d="M1 16V10H31V16z" fill="#ffffff" fill-opacity=".28"/><path d="M1 10H10V25a5 5 0 0 1-4 4.5A5 5 0 0 1 1 25z" fill="#ffffff" fill-opacity=".35"/><path d="M1 9V6a5 5 0 0 1 5-5h20a5 5 0 0 1 5 5v3z" fill="#0f72cf"/></svg>
<div class="t" style="left:765.5px;top:129.5px;font-size:14px;color:#8a8a8a;letter-spacing:0px">kmb_businfo ...</div>
<div class="b" style="left:867.6px;top:128px;width:1px;height:19px;background:#e8e8ea;"></div>
<svg class="b" style="left:870.6px;top:128.5px" width="18.5" height="18.5" viewBox="0 0 32 32"><rect x="1" y="1" width="30" height="29" rx="5" fill="url(#tgb)"/><path d="M1 16V10H31V16z" fill="#ffffff" fill-opacity=".28"/><path d="M1 10H10V25a5 5 0 0 1-4 4.5A5 5 0 0 1 1 25z" fill="#ffffff" fill-opacity=".35"/><path d="M1 9V6a5 5 0 0 1 5-5h20a5 5 0 0 1 5 5v3z" fill="#0f72cf"/></svg>
<div class="t" style="left:893.9px;top:129.5px;font-size:14px;color:#8a8a8a;letter-spacing:0px">kmb_districtfi...</div>
<div class="b" style="left:996.0px;top:128px;width:1px;height:19px;background:#e8e8ea;"></div>
<svg class="b" style="left:999.0px;top:128.5px" width="18.5" height="18.5" viewBox="0 0 32 32"><rect x="1" y="1" width="30" height="29" rx="5" fill="url(#tgb)"/><path d="M1 16V10H31V16z" fill="#ffffff" fill-opacity=".28"/><path d="M1 10H10V25a5 5 0 0 1-4 4.5A5 5 0 0 1 1 25z" fill="#ffffff" fill-opacity=".35"/><path d="M1 9V6a5 5 0 0 1 5-5h20a5 5 0 0 1 5 5v3z" fill="#0f72cf"/></svg>
<div class="t" style="left:1022.3px;top:129.5px;font-size:14px;color:#8a8a8a;letter-spacing:0px">kmb_routebo...</div>
<div class="b" style="left:1124.4px;top:128px;width:1px;height:19px;background:#e8e8ea;"></div>
<svg class="b" style="left:1127.4px;top:128.5px" width="18.5" height="18.5" viewBox="0 0 32 32"><rect x="1" y="1" width="30" height="29" rx="5" fill="url(#tgb)"/><path d="M1 16V10H31V16z" fill="#ffffff" fill-opacity=".28"/><path d="M1 10H10V25a5 5 0 0 1-4 4.5A5 5 0 0 1 1 25z" fill="#ffffff" fill-opacity=".35"/><path d="M1 9V6a5 5 0 0 1 5-5h20a5 5 0 0 1 5 5v3z" fill="#0f72cf"/></svg>
<div class="t" style="left:1150.7px;top:129.5px;font-size:14px;color:#8a8a8a;letter-spacing:0px">kmb_routefre...</div>
<div class="b" style="left:1252.8000000000002px;top:128px;width:1px;height:19px;background:#e8e8ea;"></div>
<svg class="b" style="left:1255.8000000000002px;top:128.5px" width="18.5" height="18.5" viewBox="0 0 32 32"><rect x="1" y="1" width="30" height="29" rx="5" fill="url(#tgb)"/><path d="M1 16V10H31V16z" fill="#ffffff" fill-opacity=".28"/><path d="M1 10H10V25a5 5 0 0 1-4 4.5A5 5 0 0 1 1 25z" fill="#ffffff" fill-opacity=".35"/><path d="M1 9V6a5 5 0 0 1 5-5h20a5 5 0 0 1 5 5v3z" fill="#0f72cf"/></svg>
<div class="t" style="left:1279.1000000000001px;top:129.5px;font-size:14px;color:#8a8a8a;letter-spacing:0px">kmb_routem...</div>
<div class="b" style="left:1381.7px;top:124.5px;width:128px;height:26.5px;background:#efeef1;"></div>
<div class="b" style="left:1381.2px;top:128px;width:1px;height:19px;background:#e8e8ea;"></div>
<svg class="b" style="left:1384.2px;top:128.5px" width="18.5" height="18.5" viewBox="0 0 32 32"><rect x="1" y="1" width="30" height="29" rx="5" fill="url(#tgb)"/><path d="M1 16V10H31V16z" fill="#ffffff" fill-opacity=".28"/><path d="M1 10H10V25a5 5 0 0 1-4 4.5A5 5 0 0 1 1 25z" fill="#ffffff" fill-opacity=".35"/><path d="M1 9V6a5 5 0 0 1 5-5h20a5 5 0 0 1 5 5v3z" fill="#0f72cf"/></svg>
<div class="t" style="left:1407.5px;top:129.5px;font-size:14px;color:#1a1a1a;letter-spacing:0px">kmb_routesto...</div>
<div class="b" style="left:1509.6000000000001px;top:128px;width:1px;height:19px;background:#e8e8ea;"></div>
<svg class="b" style="left:1512.6000000000001px;top:128.5px" width="18.5" height="18.5" viewBox="0 0 32 32"><rect x="1" y="1" width="30" height="29" rx="5" fill="url(#tgb)"/><path d="M1 16V10H31V16z" fill="#ffffff" fill-opacity=".28"/><path d="M1 10H10V25a5 5 0 0 1-4 4.5A5 5 0 0 1 1 25z" fill="#ffffff" fill-opacity=".35"/><path d="M1 9V6a5 5 0 0 1 5-5h20a5 5 0 0 1 5 5v3z" fill="#0f72cf"/></svg>
<div class="t" style="left:1535.9px;top:129.5px;font-size:14px;color:#8a8a8a;letter-spacing:0px">kmb_specialn...</div>
<div class="b" style="left:277px;top:151px;width:1368px;height:1px;background:#e6e6e8;"></div>
<div class="b" style="left:277px;top:152px;width:1368px;height:32.5px;background:#efeff1;"></div>
<div class="b" style="left:370px;top:158px;width:1px;height:24px;background:#dcdcde;"></div>
<div class="b" style="left:572px;top:158px;width:1px;height:24px;background:#dcdcde;"></div>
<div class="b" style="left:445px;top:157px;width:57.5px;height:26px;background:#cfe3f6;box-shadow:inset 0 0 0 1px #bcd8f2"></div>
<svg class="b" style="left:283px;top:160px" width="19" height="19" viewBox="0 0 19 19"><ellipse cx="7.5" cy="3.5" rx="6.5" ry="2.5" fill="none" stroke="#a0a0a0"/><path d="M1 3.5v11c0 1.4 2.9 2.5 6.5 2.5M14 3.5V8M1 7.3c0 1.4 2.9 2.5 6.5 2.5s6.5-1.1 6.5-2.5M1 11c0 1.4 2.9 2.5 6.5 2.5" fill="none" stroke="#a0a0a0"/><path d="M11 10.5l6.5 4-6.5 4z" fill="none" stroke="#3b97e8" stroke-width="1.2"/></svg>
<div class="t" style="left:302.7px;top:163.5px;font-size:13.5px;color:#1a1a1a;">开始事务</div>
<svg class="b" style="left:385px;top:160px" width="16" height="19" viewBox="0 0 16 19"><path d="M1.5 1.5h9l4 4v12h-13z" fill="#fff" stroke="#9a9a9a"/><path d="M4 9h7M4 11.5h7M4 14h5" stroke="#3b97e8" stroke-width="1.2"/></svg>
<div class="t" style="left:403.7px;top:163.5px;font-size:13.5px;color:#1a1a1a;">文本</div>
<svg class="b" style="left:437px;top:168px" width="7" height="4" viewBox="0 0 7 4"><path d="M0 0h7L3.5 4z" fill="#222"/></svg>
<svg class="b" style="left:450px;top:161px" width="17" height="18" viewBox="0 0 17 18"><path d="M1 1.5h15l-5.5 7v8l-4-2.5V8.5z" fill="none" stroke="#3b8ee0" stroke-width="1.2"/></svg>
<div class="t" style="left:468.7px;top:163.5px;font-size:13.5px;color:#1a1a1a;">筛选</div>
<svg class="b" style="left:507px;top:160px" width="19" height="20" viewBox="0 0 19 20"><path d="M4 1v16M1 14l3 4 3-4" stroke="#3b97e8" stroke-width="1.2" fill="none"/><path d="M10 3h8M10 8h8M10 13h8M10 18h8" stroke="#9a9a9a"/></svg>
<div class="t" style="left:526.7px;top:163.5px;font-size:13.5px;color:#1a1a1a;">排序</div>
<svg class="b" style="left:580px;top:160px" width="19" height="20" viewBox="0 0 19 20"><path d="M8 15.5H3.5a2 2 0 0 1-2-2v-10a2 2 0 0 1 2-2h9a2 2 0 0 1 2 2v4" fill="none" stroke="#9a9a9a" stroke-width="0.9"/><path d="M15.5 18.5c0-4-2.5-6-6-6h-2M9.5 9.5l-3 3 3 3" stroke="#5cc23a" stroke-width="1.8" fill="none"/></svg>
<div class="t" style="left:600.2px;top:163.5px;font-size:13.5px;color:#1a1a1a;">导入</div>
<svg class="b" style="left:638px;top:160px" width="19" height="20" viewBox="0 0 19 20"><path d="M8 15.5H3.5a2 2 0 0 1-2-2v-10a2 2 0 0 1 2-2h9a2 2 0 0 1 2 2v3" fill="none" stroke="#9a9a9a" stroke-width="0.9"/><path d="M7 8c0 4 2.5 6.5 6 6.5h2M12.5 11.5l3 3-3 3" stroke="#f2a81d" stroke-width="1.8" fill="none"/></svg>
<div class="t" style="left:658.2px;top:163.5px;font-size:13.5px;color:#1a1a1a;">导出</div>
<svg class="b" style="left:695px;top:159.5px" width="20" height="21" viewBox="0 0 20 21"><ellipse cx="8" cy="3.5" rx="6.5" ry="2.5" fill="none" stroke="#a0a0a0" stroke-width="0.9"/><path d="M1.5 3.5v12c0 1.4 2.9 2.5 6.5 2.5M14.5 3.5V7M1.5 7.5c0 1.4 2.9 2.5 6.5 2.5M1.5 11.5c0 1.4 2.9 2.5 4.5 2.5" fill="none" stroke="#a0a0a0" stroke-width="0.9"/><rect x="6.5" y="8" width="13" height="12.5" rx="1.5" fill="#1e88e5"/><text x="13" y="13.3" font-size="4.6" font-family="Liberation Sans" font-weight="bold" text-anchor="middle" fill="#fff">101</text><text x="13" y="18.6" font-size="4.6" font-family="Liberation Sans" font-weight="bold" text-anchor="middle" fill="#fff">ABC</text></svg>
<div class="t" style="left:715.7px;top:163.5px;font-size:13.5px;color:#1a1a1a;">数据生成</div>
<svg class="b" style="left:780px;top:160px" width="19" height="20" viewBox="0 0 19 20"><rect x="1" y="7" width="3" height="9" rx="1.5" fill="none" stroke="#4a9ee8" stroke-width="1"/><rect x="5.5" y="1" width="3" height="17" rx="1.5" fill="none" stroke="#4a9ee8" stroke-width="1"/><rect x="10" y="5" width="3" height="13" rx="1.5" fill="none" stroke="#4a9ee8" stroke-width="1"/><rect x="14.5" y="8" width="3" height="9" rx="1.5" fill="none" stroke="#4a9ee8" stroke-width="1"/></svg>
<div class="t" style="left:800.2px;top:163.5px;font-size:13.5px;color:#1a1a1a;">创建图表</div>
<div class="b" style="left:277px;top:184.5px;width:1365px;height:774.5px;background:#ffffff;"></div>
<div class="b" style="left:277.5px;top:195px;width:1364.5px;height:21px;background:#d9d9dc;"></div>
<svg class="b" style="left:290px;top:198px" width="14.5" height="14.5" viewBox="0 0 14.5 14.5"><rect x="0" y="0" width="14.5" height="14.5" rx="2.5" fill="#0f62c4"/><path d="M3.8 7.3l2.3 2.3 4.6-4.6" stroke="#cfe2ff" stroke-width="1.1" fill="none"/></svg>
<svg class="b" style="left:290px;top:219px" width="14.5" height="14.5" viewBox="0 0 14.5 14.5"><rect x="0" y="0" width="14.5" height="14.5" rx="2.5" fill="#0f62c4"/><path d="M3.8 7.3l2.3 2.3 4.6-4.6" stroke="#cfe2ff" stroke-width="1.1" fill="none"/></svg>
<div class="t" style="left:310.5px;top:196.5px;font-size:14px;color:#2a2ad0;">lat</div>
<div class="t" style="left:336px;top:196.5px;font-size:14px;color:#1a1a1a;">=</div>
<div class="t" style="left:354.5px;top:196.5px;font-size:14px;color:#2a2ad0;letter-spacing:0.35px">22.4160270000</div>
<div class="t" style="left:461px;top:196.5px;font-size:14px;color:#1a1a1a;">and</div>
<div class="t" style="left:310.5px;top:217.5px;font-size:14px;color:#2a2ad0;">lng</div>
<div class="t" style="left:341px;top:217.5px;font-size:14px;color:#1a1a1a;">=</div>
<div class="t" style="left:359.5px;top:217.5px;font-size:14px;color:#2a2ad0;letter-spacing:0.35px">114.2139450000</div>
<svg class="b" style="left:481.5px;top:218.5px" width="22" height="15.5" viewBox="0 0 22 15.5"><rect width="22" height="15.5" rx="1.5" fill="#a9a9ab"/><path d="M6 7.75h10M11 2.75v10" stroke="#fff" stroke-width="1.6"/></svg>
<svg class="b" style="left:511px;top:218.5px" width="22" height="15.5" viewBox="0 0 22 15.5"><rect width="22" height="15.5" rx="1.5" fill="#a9a9ab"/><path d="M5.5 4.5a3 3 0 0 0 0 4.5M9 4.5a3 3 0 0 1 0 4.5" stroke="#fff" stroke-width="1.1" fill="none"/><path d="M12.5 10.5h5M15 8v5" stroke="#fff" stroke-width="1.2"/></svg>
<svg class="b" style="left:298px;top:269px" width="10" height="11" viewBox="0 0 10 11"><path d="M5 1L1 5.5h2.5V10h3V5.5H9z" fill="#555"/></svg>
<svg class="b" style="left:330px;top:269px" width="10" height="11" viewBox="0 0 10 11"><path d="M5 10L1 5.5h2.5V1h3v4.5H9z" fill="#555"/></svg>
<svg class="b" style="left:361.5px;top:268.5px" width="14" height="12" viewBox="0 0 14 12"><path d="M1.5 6.5l3.5 3.5 7.5-8" stroke="#555" stroke-width="2" fill="none"/></svg>
<div class="t" style="left:381.5px;top:266.5px;font-size:13.5px;color:#1a1a1a;">应用</div>
<div class="b" style="left:277px;top:290px;width:1348px;height:1px;background:#ebebed;"></div>
<div class="b" style="left:290px;top:292.5px;width:147.5px;height:21.7px;background:#dcebf9;"></div>
<div class="b" style="left:437.5px;top:292.5px;width:1px;height:21.7px;background:#e8e8ea;"></div>
<div class="t" style="left:292.6px;top:296.0px;font-size:14px;color:#1a1a1a;">stop_loc_cn2</div>
<div class="b" style="left:553.3px;top:292.5px;width:1px;height:21.7px;background:#e8e8ea;"></div>
<div class="t" style="left:440.1px;top:296.0px;font-size:14px;color:#1a1a1a;">stop_loc_cn3</div>
<div class="b" style="left:694px;top:292.5px;width:1px;height:21.7px;background:#e8e8ea;"></div>
<div class="t" style="left:555.9px;top:296.0px;font-size:14px;color:#1a1a1a;">subarea</div>
<div class="b" style="left:864.4px;top:292.5px;width:1px;height:21.7px;background:#e8e8ea;"></div>
<div class="t" style="left:696.6px;top:296.0px;font-size:14px;color:#1a1a1a;">stop_name</div>
<div class="b" style="left:946.8px;top:292.5px;width:1px;height:21.7px;background:#e8e8ea;"></div>
<div class="t" style="left:867.0px;top:296.0px;width:80.39999999999998px;overflow:hidden;font-size:14px;color:#1a1a1a">stop_name_cn</div>
<div class="b" style="left:1048.6px;top:292.5px;width:1px;height:21.7px;background:#e8e8ea;"></div>
<div class="t" style="left:949.4px;top:296.0px;font-size:14px;color:#1a1a1a;">stop_name_cn</div>
<div class="b" style="left:1127.4px;top:292.5px;width:1px;height:21.7px;background:#e8e8ea;"></div>
<div class="t" style="left:1051.1999999999998px;top:296.0px;font-size:14px;color:#1a1a1a;">district</div>
<div class="b" style="left:1239.3px;top:292.5px;width:1px;height:21.7px;background:#e8e8ea;"></div>
<div class="t" style="left:1130.0px;top:296.0px;font-size:14px;color:#1a1a1a;">service_type</div>
<div class="b" style="left:1374.3px;top:292.5px;width:1px;height:21.7px;background:#e8e8ea;"></div>
<div class="t" style="left:1241.8999999999999px;top:296.0px;font-size:14px;color:#1a1a1a;">lat</div>
<div class="b" style="left:1517.5px;top:292.5px;width:1px;height:21.7px;background:#e8e8ea;"></div>
<div class="t" style="left:1376.8999999999999px;top:296.0px;font-size:14px;color:#1a1a1a;">lng</div>
<div class="b" style="left:277px;top:314.2px;width:1240.5px;height:1px;background:#e4e4e6;"></div>
<svg class="b" style="left:1358px;top:297.5px" width="11" height="10" viewBox="0 0 11 10"><path d="M0 0h11L6.5 5.5V10L4.5 9V5.5z" fill="#777"/></svg>
<svg class="b" style="left:1501px;top:297.5px" width="11" height="10" viewBox="0 0 11 10"><path d="M0 0h11L6.5 5.5V10L4.5 9V5.5z" fill="#777"/></svg>
<div class="b" style="left:277px;top:315.2px;width:13px;height:22.5px;background:#e6f0fa;"></div>
<div class="b" style="left:290px;top:315.2px;width:147.5px;height:22.5px;background:#7fc0f4;"></div>
<div class="b" style="left:290px;top:315.2px;width:147.5px;height:21.5px;background:#0b6cd4;"></div>
<div class="b" style="left:437.5px;top:336.7px;width:1080px;height:1px;background:#f3f3f5;"></div>
<div class="b" style="left:553.3px;top:315.2px;width:1px;height:22.5px;background:#f5f5f7;"></div>
<div class="b" style="left:694px;top:315.2px;width:1px;height:22.5px;background:#f5f5f7;"></div>
<div class="b" style="left:864.4px;top:315.2px;width:1px;height:22.5px;background:#f5f5f7;"></div>
<div class="b" style="left:946.8px;top:315.2px;width:1px;height:22.5px;background:#f5f5f7;"></div>
<div class="b" style="left:1048.6px;top:315.2px;width:1px;height:22.5px;background:#f5f5f7;"></div>
<div class="b" style="left:1127.4px;top:315.2px;width:1px;height:22.5px;background:#f5f5f7;"></div>
<div class="b" style="left:1239.3px;top:315.2px;width:1px;height:22.5px;background:#f5f5f7;"></div>
<div class="b" style="left:1374.3px;top:315.2px;width:1px;height:22.5px;background:#f5f5f7;"></div>
<div class="b" style="left:1517.5px;top:315.2px;width:1px;height:22.5px;background:#f5f5f7;"></div>
<div class="t" style="left:291.5px;top:317.8px;font-size:14px;color:#ffffff;letter-spacing:-0.15px">近灯柱CE1453</div>
<div class="t" style="left:555.5px;top:317.8px;font-size:14px;color:#1a1a1a;letter-spacing:0.2px">SC02-S-1100-0</div>
<div class="t" style="left:697px;top:317.8px;font-size:14px;color:#1a1a1a;transform:scaleX(0.942);transform-origin:0 0">MA LIU SHUI PUBLIC PIER</div>
<div class="t" style="left:866.5px;top:317.8px;width:79px;overflow:hidden;font-size:13.4px;color:#1a1a1a">馬料水公眾碼頭</div>
<div class="t" style="left:949px;top:317.8px;font-size:14px;color:#1a1a1a;letter-spacing:-0.5px">马料水公众码头</div>
<div class="t" style="left:1051px;top:317.8px;font-size:14px;color:#1a1a1a;">07</div>
<div class="t" style="left:1129.5px;top:317.8px;font-size:14px;color:#1a1a1a;">01</div>
<div class="t" style="left:1241px;top:317.8px;font-size:14px;color:#1a1a1a;letter-spacing:0.35px">22.4160270000</div>
<div class="t" style="left:1376px;top:317.8px;font-size:14px;color:#1a1a1a;letter-spacing:0.35px">114.2139450000</div>
<div class="b" style="left:277px;top:337.7px;width:13px;height:22.5px;background:#e6f0fa;"></div>
<div class="b" style="left:290px;top:337.7px;width:147.5px;height:22.5px;background:#7fc0f4;"></div>
<div class="b" style="left:290px;top:337.7px;width:147.5px;height:21.5px;background:#0b6cd4;"></div>
<div class="b" style="left:437.5px;top:359.2px;width:1080px;height:1px;background:#f3f3f5;"></div>
<div class="b" style="left:553.3px;top:337.7px;width:1px;height:22.5px;background:#f5f5f7;"></div>
<div class="b" style="left:694px;top:337.7px;width:1px;height:22.5px;background:#f5f5f7;"></div>
<div class="b" style="left:864.4px;top:337.7px;width:1px;height:22.5px;background:#f5f5f7;"></div>
<div class="b" style="left:946.8px;top:337.7px;width:1px;height:22.5px;background:#f5f5f7;"></div>
<div class="b" style="left:1048.6px;top:337.7px;width:1px;height:22.5px;background:#f5f5f7;"></div>
<div class="b" style="left:1127.4px;top:337.7px;width:1px;height:22.5px;background:#f5f5f7;"></div>
<div class="b" style="left:1239.3px;top:337.7px;width:1px;height:22.5px;background:#f5f5f7;"></div>
<div class="b" style="left:1374.3px;top:337.7px;width:1px;height:22.5px;background:#f5f5f7;"></div>
<div class="b" style="left:1517.5px;top:337.7px;width:1px;height:22.5px;background:#f5f5f7;"></div>
<div class="t" style="left:291.5px;top:340.3px;font-size:14px;color:#ffffff;letter-spacing:-0.15px">近灯柱CE1453</div>
<div class="t" style="left:555.5px;top:340.3px;font-size:14px;color:#1a1a1a;letter-spacing:0.2px">SC02-S-1100-0</div>
<div class="t" style="left:697px;top:340.3px;font-size:14px;color:#1a1a1a;transform:scaleX(0.942);transform-origin:0 0">MA LIU SHUI PUBLIC PIER</div>
<div class="t" style="left:866.5px;top:340.3px;width:79px;overflow:hidden;font-size:13.4px;color:#1a1a1a">馬料水公眾碼頭</div>
<div class="t" style="left:949px;top:340.3px;font-size:14px;color:#1a1a1a;letter-spacing:-0.5px">马料水公众码头</div>
<div class="t" style="left:1051px;top:340.3px;font-size:14px;color:#1a1a1a;">07</div>
<div class="t" style="left:1129.5px;top:340.3px;font-size:14px;color:#1a1a1a;">01</div>
<div class="t" style="left:1241px;top:340.3px;font-size:14px;color:#1a1a1a;letter-spacing:0.35px">22.4160270000</div>
<div class="t" style="left:1376px;top:340.3px;font-size:14px;color:#1a1a1a;letter-spacing:0.35px">114.2139450000</div>
<div class="b" style="left:437.5px;top:360.2px;width:1080px;height:22.5px;background:#f6f6f8;"></div>
<div class="b" style="left:277px;top:360.2px;width:13px;height:22.5px;background:#e6f0fa;"></div>
<div class="b" style="left:290px;top:360.2px;width:147.5px;height:22.5px;background:#7fc0f4;"></div>
<div class="b" style="left:290px;top:360.2px;width:147.5px;height:21.5px;background:#0b6cd4;"></div>
<div class="b" style="left:437.5px;top:381.7px;width:1080px;height:1px;background:#f3f3f5;"></div>
<div class="b" style="left:553.3px;top:360.2px;width:1px;height:22.5px;background:#f5f5f7;"></div>
<div class="b" style="left:694px;top:360.2px;width:1px;height:22.5px;background:#f5f5f7;"></div>
<div class="b" style="left:864.4px;top:360.2px;width:1px;height:22.5px;background:#f5f5f7;"></div>
<div class="b" style="left:946.8px;top:360.2px;width:1px;height:22.5px;background:#f5f5f7;"></div>
<div class="b" style="left:1048.6px;top:360.2px;width:1px;height:22.5px;background:#f5f5f7;"></div>
<div class="b" style="left:1127.4px;top:360.2px;width:1px;height:22.5px;background:#f5f5f7;"></div>
<div class="b" style="left:1239.3px;top:360.2px;width:1px;height:22.5px;background:#f5f5f7;"></div>
<div class="b" style="left:1374.3px;top:360.2px;width:1px;height:22.5px;background:#f5f5f7;"></div>
<div class="b" style="left:1517.5px;top:360.2px;width:1px;height:22.5px;background:#f5f5f7;"></div>
<div class="t" style="left:291.5px;top:362.8px;font-size:14px;color:#ffffff;letter-spacing:-0.15px">近灯柱CE1453</div>
<div class="t" style="left:555.5px;top:362.8px;font-size:14px;color:#1a1a1a;letter-spacing:0.2px">SC02-S-1100-0</div>
<div class="t" style="left:697px;top:362.8px;font-size:14px;color:#1a1a1a;transform:scaleX(0.942);transform-origin:0 0">MA LIU SHUI PUBLIC PIER</div>
<div class="t" style="left:866.5px;top:362.8px;width:79px;overflow:hidden;font-size:13.4px;color:#1a1a1a">馬料水公眾碼頭</div>
<div class="t" style="left:949px;top:362.8px;font-size:14px;color:#1a1a1a;letter-spacing:-0.5px">马料水公众码头</div>
<div class="t" style="left:1051px;top:362.8px;font-size:14px;color:#1a1a1a;">07</div>
<div class="t" style="left:1129.5px;top:362.8px;font-size:14px;color:#1a1a1a;">01</div>
<div class="t" style="left:1241px;top:362.8px;font-size:14px;color:#1a1a1a;letter-spacing:0.35px">22.4160270000</div>
<div class="t" style="left:1376px;top:362.8px;font-size:14px;color:#1a1a1a;letter-spacing:0.35px">114.2139450000</div>
<div class="b" style="left:277px;top:382.7px;width:13px;height:22.5px;background:#e6f0fa;"></div>
<div class="b" style="left:290px;top:382.7px;width:147.5px;height:22.5px;background:#7fc0f4;"></div>
<div class="b" style="left:290px;top:382.7px;width:147.5px;height:21.5px;background:#0b6cd4;"></div>
<div class="b" style="left:437.5px;top:404.2px;width:1080px;height:1px;background:#f3f3f5;"></div>
<div class="b" style="left:553.3px;top:382.7px;width:1px;height:22.5px;background:#f5f5f7;"></div>
<div class="b" style="left:694px;top:382.7px;width:1px;height:22.5px;background:#f5f5f7;"></div>
<div class="b" style="left:864.4px;top:382.7px;width:1px;height:22.5px;background:#f5f5f7;"></div>
<div class="b" style="left:946.8px;top:382.7px;width:1px;height:22.5px;background:#f5f5f7;"></div>
<div class="b" style="left:1048.6px;top:382.7px;width:1px;height:22.5px;background:#f5f5f7;"></div>
<div class="b" style="left:1127.4px;top:382.7px;width:1px;height:22.5px;background:#f5f5f7;"></div>
<div class="b" style="left:1239.3px;top:382.7px;width:1px;height:22.5px;background:#f5f5f7;"></div>
<div class="b" style="left:1374.3px;top:382.7px;width:1px;height:22.5px;background:#f5f5f7;"></div>
<div class="b" style="left:1517.5px;top:382.7px;width:1px;height:22.5px;background:#f5f5f7;"></div>
<div class="t" style="left:291.5px;top:385.3px;font-size:14px;color:#ffffff;letter-spacing:-0.15px">近灯柱CE1453</div>
<div class="t" style="left:555.5px;top:385.3px;font-size:14px;color:#1a1a1a;letter-spacing:0.2px">SC02-S-1100-0</div>
<div class="t" style="left:697px;top:385.3px;font-size:14px;color:#1a1a1a;transform:scaleX(0.942);transform-origin:0 0">MA LIU SHUI PUBLIC PIER</div>
<div class="t" style="left:866.5px;top:385.3px;width:79px;overflow:hidden;font-size:13.4px;color:#1a1a1a">馬料水公眾碼頭</div>
<div class="t" style="left:949px;top:385.3px;font-size:14px;color:#1a1a1a;letter-spacing:-0.5px">马料水公众码头</div>
<div class="t" style="left:1051px;top:385.3px;font-size:14px;color:#1a1a1a;">07</div>
<div class="t" style="left:1129.5px;top:385.3px;font-size:14px;color:#1a1a1a;">01</div>
<div class="t" style="left:1241px;top:385.3px;font-size:14px;color:#1a1a1a;letter-spacing:0.35px">22.4160270000</div>
<div class="t" style="left:1376px;top:385.3px;font-size:14px;color:#1a1a1a;letter-spacing:0.35px">114.2139450000</div>
<div class="b" style="left:277px;top:405.2px;width:13px;height:22.5px;background:#e6f0fa;"></div>
<div class="b" style="left:290px;top:405.2px;width:147.5px;height:22.5px;background:#7fc0f4;"></div>
<div class="b" style="left:290px;top:405.2px;width:147.5px;height:21.5px;background:#0b6cd4;"></div>
<div class="b" style="left:437.5px;top:426.7px;width:1080px;height:1px;background:#f3f3f5;"></div>
<div class="b" style="left:553.3px;top:405.2px;width:1px;height:22.5px;background:#f5f5f7;"></div>
<div class="b" style="left:694px;top:405.2px;width:1px;height:22.5px;background:#f5f5f7;"></div>
<div class="b" style="left:864.4px;top:405.2px;width:1px;height:22.5px;background:#f5f5f7;"></div>
<div class="b" style="left:946.8px;top:405.2px;width:1px;height:22.5px;background:#f5f5f7;"></div>
<div class="b" style="left:1048.6px;top:405.2px;width:1px;height:22.5px;background:#f5f5f7;"></div>
<div class="b" style="left:1127.4px;top:405.2px;width:1px;height:22.5px;background:#f5f5f7;"></div>
<div class="b" style="left:1239.3px;top:405.2px;width:1px;height:22.5px;background:#f5f5f7;"></div>
<div class="b" style="left:1374.3px;top:405.2px;width:1px;height:22.5px;background:#f5f5f7;"></div>
<div class="b" style="left:1517.5px;top:405.2px;width:1px;height:22.5px;background:#f5f5f7;"></div>
<div class="t" style="left:291.5px;top:407.8px;font-size:14px;color:#ffffff;letter-spacing:-0.15px">近灯柱CE1453</div>
<div class="t" style="left:555.5px;top:407.8px;font-size:14px;color:#1a1a1a;letter-spacing:0.2px">SC02-S-1100-0</div>
<div class="t" style="left:697px;top:407.8px;font-size:14px;color:#1a1a1a;transform:scaleX(0.942);transform-origin:0 0">MA LIU SHUI PUBLIC PIER</div>
<div class="t" style="left:866.5px;top:407.8px;width:79px;overflow:hidden;font-size:13.4px;color:#1a1a1a">馬料水公眾碼頭</div>
<div class="t" style="left:949px;top:407.8px;font-size:14px;color:#1a1a1a;letter-spacing:-0.5px">马料水公众码头</div>
<div class="t" style="left:1051px;top:407.8px;font-size:14px;color:#1a1a1a;">07</div>
<div class="t" style="left:1129.5px;top:407.8px;font-size:14px;color:#1a1a1a;">01</div>
<div class="t" style="left:1241px;top:407.8px;font-size:14px;color:#1a1a1a;letter-spacing:0.35px">22.4160270000</div>
<div class="t" style="left:1376px;top:407.8px;font-size:14px;color:#1a1a1a;letter-spacing:0.35px">114.2139450000</div>
<div class="b" style="left:437.5px;top:427.7px;width:1080px;height:22.5px;background:#f3f8fd;"></div>
<div class="b" style="left:277px;top:427.7px;width:13px;height:22.5px;background:#e6f0fa;"></div>
<div class="b" style="left:290px;top:427.7px;width:147.5px;height:22.5px;background:#7fc0f4;"></div>
<div class="b" style="left:290px;top:427.7px;width:147.5px;height:21.5px;background:#0b6cd4;"></div>
<div class="b" style="left:437.5px;top:449.2px;width:1080px;height:1px;background:#f3f3f5;"></div>
<div class="b" style="left:553.3px;top:427.7px;width:1px;height:22.5px;background:#f5f5f7;"></div>
<div class="b" style="left:694px;top:427.7px;width:1px;height:22.5px;background:#f5f5f7;"></div>
<div class="b" style="left:864.4px;top:427.7px;width:1px;height:22.5px;background:#f5f5f7;"></div>
<div class="b" style="left:946.8px;top:427.7px;width:1px;height:22.5px;background:#f5f5f7;"></div>
<div class="b" style="left:1048.6px;top:427.7px;width:1px;height:22.5px;background:#f5f5f7;"></div>
<div class="b" style="left:1127.4px;top:427.7px;width:1px;height:22.5px;background:#f5f5f7;"></div>
<div class="b" style="left:1239.3px;top:427.7px;width:1px;height:22.5px;background:#f5f5f7;"></div>
<div class="b" style="left:1374.3px;top:427.7px;width:1px;height:22.5px;background:#f5f5f7;"></div>
<div class="b" style="left:1517.5px;top:427.7px;width:1px;height:22.5px;background:#f5f5f7;"></div>
<div class="t" style="left:291.5px;top:430.3px;font-size:14px;color:#ffffff;letter-spacing:-0.15px">近灯柱CE1453</div>
<div class="t" style="left:555.5px;top:430.3px;font-size:14px;color:#1a1a1a;letter-spacing:0.2px">SC02-S-1100-0</div>
<div class="t" style="left:697px;top:430.3px;font-size:14px;color:#1a1a1a;transform:scaleX(0.942);transform-origin:0 0">MA LIU SHUI PUBLIC PIER</div>
<div class="t" style="left:866.5px;top:430.3px;width:79px;overflow:hidden;font-size:13.4px;color:#1a1a1a">馬料水公眾碼頭</div>
<div class="t" style="left:949px;top:430.3px;font-size:14px;color:#1a1a1a;letter-spacing:-0.5px">马料水公众码头</div>
<div class="t" style="left:1051px;top:430.3px;font-size:14px;color:#1a1a1a;">07</div>
<div class="t" style="left:1129.5px;top:430.3px;font-size:14px;color:#1a1a1a;">01</div>
<div class="t" style="left:1241px;top:430.3px;font-size:14px;color:#1a1a1a;letter-spacing:0.35px">22.4160270000</div>
<div class="t" style="left:1376px;top:430.3px;font-size:14px;color:#1a1a1a;letter-spacing:0.35px">114.2139450000</div>
<div class="b" style="left:277px;top:450.2px;width:13px;height:22.5px;background:#e6f0fa;"></div>
<div class="b" style="left:290px;top:450.2px;width:147.5px;height:22.5px;background:#7fc0f4;"></div>
<div class="b" style="left:290px;top:450.2px;width:147.5px;height:21.5px;background:#0b6cd4;"></div>
<div class="b" style="left:437.5px;top:471.7px;width:1080px;height:1px;background:#f3f3f5;"></div>
<div class="b" style="left:553.3px;top:450.2px;width:1px;height:22.5px;background:#f5f5f7;"></div>
<div class="b" style="left:694px;top:450.2px;width:1px;height:22.5px;background:#f5f5f7;"></div>
<div class="b" style="left:864.4px;top:450.2px;width:1px;height:22.5px;background:#f5f5f7;"></div>
<div class="b" style="left:946.8px;top:450.2px;width:1px;height:22.5px;background:#f5f5f7;"></div>
<div class="b" style="left:1048.6px;top:450.2px;width:1px;height:22.5px;background:#f5f5f7;"></div>
<div class="b" style="left:1127.4px;top:450.2px;width:1px;height:22.5px;background:#f5f5f7;"></div>
<div class="b" style="left:1239.3px;top:450.2px;width:1px;height:22.5px;background:#f5f5f7;"></div>
<div class="b" style="left:1374.3px;top:450.2px;width:1px;height:22.5px;background:#f5f5f7;"></div>
<div class="b" style="left:1517.5px;top:450.2px;width:1px;height:22.5px;background:#f5f5f7;"></div>
<div class="t" style="left:291.5px;top:452.8px;font-size:14px;color:#ffffff;letter-spacing:-0.15px">近灯柱CE1453</div>
<div class="t" style="left:555.5px;top:452.8px;font-size:14px;color:#1a1a1a;letter-spacing:0.2px">SC02-S-1100-0</div>
<div class="t" style="left:697px;top:452.8px;font-size:14px;color:#1a1a1a;transform:scaleX(0.942);transform-origin:0 0">MA LIU SHUI PUBLIC PIER</div>
<div class="t" style="left:866.5px;top:452.8px;width:79px;overflow:hidden;font-size:13.4px;color:#1a1a1a">馬料水公眾碼頭</div>
<div class="t" style="left:949px;top:452.8px;font-size:14px;color:#1a1a1a;letter-spacing:-0.5px">马料水公众码头</div>
<div class="t" style="left:1051px;top:452.8px;font-size:14px;color:#1a1a1a;">07</div>
<div class="t" style="left:1129.5px;top:452.8px;font-size:14px;color:#1a1a1a;">01</div>
<div class="t" style="left:1241px;top:452.8px;font-size:14px;color:#1a1a1a;letter-spacing:0.35px">22.4160270000</div>
<div class="t" style="left:1376px;top:452.8px;font-size:14px;color:#1a1a1a;letter-spacing:0.35px">114.2139450000</div>
<div class="b" style="left:277px;top:472.7px;width:13px;height:22.5px;background:#e6f0fa;"></div>
<div class="b" style="left:290px;top:472.7px;width:147.5px;height:22.5px;background:#7fc0f4;"></div>
<div class="b" style="left:290px;top:472.7px;width:147.5px;height:21.5px;background:#0b6cd4;"></div>
<div class="b" style="left:437.5px;top:494.2px;width:1080px;height:1px;background:#f3f3f5;"></div>
<div class="b" style="left:553.3px;top:472.7px;width:1px;height:22.5px;background:#f5f5f7;"></div>
<div class="b" style="left:694px;top:472.7px;width:1px;height:22.5px;background:#f5f5f7;"></div>
<div class="b" style="left:864.4px;top:472.7px;width:1px;height:22.5px;background:#f5f5f7;"></div>
<div class="b" style="left:946.8px;top:472.7px;width:1px;height:22.5px;background:#f5f5f7;"></div>
<div class="b" style="left:1048.6px;top:472.7px;width:1px;height:22.5px;background:#f5f5f7;"></div>
<div class="b" style="left:1127.4px;top:472.7px;width:1px;height:22.5px;background:#f5f5f7;"></div>
<div class="b" style="left:1239.3px;top:472.7px;width:1px;height:22.5px;background:#f5f5f7;"></div>
<div class="b" style="left:1374.3px;top:472.7px;width:1px;height:22.5px;background:#f5f5f7;"></div>
<div class="b" style="left:1517.5px;top:472.7px;width:1px;height:22.5px;background:#f5f5f7;"></div>
<div class="t" style="left:291.5px;top:475.3px;font-size:14px;color:#ffffff;letter-spacing:-0.15px">近灯柱CE1453</div>
<div class="t" style="left:555.5px;top:475.3px;font-size:14px;color:#1a1a1a;letter-spacing:0.2px">SC02-S-1100-0</div>
<div class="t" style="left:697px;top:475.3px;font-size:14px;color:#1a1a1a;transform:scaleX(0.942);transform-origin:0 0">MA LIU SHUI PUBLIC PIER</div>
<div class="t" style="left:866.5px;top:475.3px;width:79px;overflow:hidden;font-size:13.4px;color:#1a1a1a">馬料水公眾碼頭</div>
<div class="t" style="left:949px;top:475.3px;font-size:14px;color:#1a1a1a;letter-spacing:-0.5px">马料水公众码头</div>
<div class="t" style="left:1051px;top:475.3px;font-size:14px;color:#1a1a1a;">07</div>
<div class="t" style="left:1129.5px;top:475.3px;font-size:14px;color:#1a1a1a;">01</div>
<div class="t" style="left:1241px;top:475.3px;font-size:14px;color:#1a1a1a;letter-spacing:0.35px">22.4160270000</div>
<div class="t" style="left:1376px;top:475.3px;font-size:14px;color:#1a1a1a;letter-spacing:0.35px">114.2139450000</div>
<div class="b" style="left:437.5px;top:495.2px;width:1080px;height:22.5px;background:#f6f6f8;"></div>
<div class="b" style="left:277px;top:495.2px;width:13px;height:22.5px;background:#e6f0fa;"></div>
<div class="b" style="left:290px;top:495.2px;width:147.5px;height:22.5px;background:#7fc0f4;"></div>
<div class="b" style="left:290px;top:495.2px;width:147.5px;height:21.5px;background:#0b6cd4;"></div>
<div class="b" style="left:437.5px;top:516.7px;width:1080px;height:1px;background:#f3f3f5;"></div>
<div class="b" style="left:553.3px;top:495.2px;width:1px;height:22.5px;background:#f5f5f7;"></div>
<div class="b" style="left:694px;top:495.2px;width:1px;height:22.5px;background:#f5f5f7;"></div>
<div class="b" style="left:864.4px;top:495.2px;width:1px;height:22.5px;background:#f5f5f7;"></div>
<div class="b" style="left:946.8px;top:495.2px;width:1px;height:22.5px;background:#f5f5f7;"></div>
<div class="b" style="left:1048.6px;top:495.2px;width:1px;height:22.5px;background:#f5f5f7;"></div>
<div class="b" style="left:1127.4px;top:495.2px;width:1px;height:22.5px;background:#f5f5f7;"></div>
<div class="b" style="left:1239.3px;top:495.2px;width:1px;height:22.5px;background:#f5f5f7;"></div>
<div class="b" style="left:1374.3px;top:495.2px;width:1px;height:22.5px;background:#f5f5f7;"></div>
<div class="b" style="left:1517.5px;top:495.2px;width:1px;height:22.5px;background:#f5f5f7;"></div>
<div class="t" style="left:291.5px;top:497.8px;font-size:14px;color:#ffffff;letter-spacing:-0.15px">近灯柱CE1453</div>
<div class="t" style="left:555.5px;top:497.8px;font-size:14px;color:#1a1a1a;letter-spacing:0.2px">SC02-S-1100-0</div>
<div class="t" style="left:697px;top:497.8px;font-size:14px;color:#1a1a1a;transform:scaleX(0.942);transform-origin:0 0">MA LIU SHUI PUBLIC PIER</div>
<div class="t" style="left:866.5px;top:497.8px;width:79px;overflow:hidden;font-size:13.4px;color:#1a1a1a">馬料水公眾碼頭</div>
<div class="t" style="left:949px;top:497.8px;font-size:14px;color:#1a1a1a;letter-spacing:-0.5px">马料水公众码头</div>
<div class="t" style="left:1051px;top:497.8px;font-size:14px;color:#1a1a1a;">07</div>
<div class="t" style="left:1129.5px;top:497.8px;font-size:14px;color:#1a1a1a;">01</div>
<div class="t" style="left:1241px;top:497.8px;font-size:14px;color:#1a1a1a;letter-spacing:0.35px">22.4160270000</div>
<div class="t" style="left:1376px;top:497.8px;font-size:14px;color:#1a1a1a;letter-spacing:0.35px">114.2139450000</div>
<div class="b" style="left:277px;top:517.7px;width:13px;height:22.5px;background:#e6f0fa;"></div>
<div class="b" style="left:290px;top:517.7px;width:147.5px;height:22.5px;background:#7fc0f4;"></div>
<div class="b" style="left:290px;top:517.7px;width:147.5px;height:21.5px;background:#0b6cd4;"></div>
<div class="b" style="left:437.5px;top:539.2px;width:1080px;height:1px;background:#f3f3f5;"></div>
<div class="b" style="left:553.3px;top:517.7px;width:1px;height:22.5px;background:#f5f5f7;"></div>
<div class="b" style="left:694px;top:517.7px;width:1px;height:22.5px;background:#f5f5f7;"></div>
<div class="b" style="left:864.4px;top:517.7px;width:1px;height:22.5px;background:#f5f5f7;"></div>
<div class="b" style="left:946.8px;top:517.7px;width:1px;height:22.5px;background:#f5f5f7;"></div>
<div class="b" style="left:1048.6px;top:517.7px;width:1px;height:22.5px;background:#f5f5f7;"></div>
<div class="b" style="left:1127.4px;top:517.7px;width:1px;height:22.5px;background:#f5f5f7;"></div>
<div class="b" style="left:1239.3px;top:517.7px;width:1px;height:22.5px;background:#f5f5f7;"></div>
<div class="b" style="left:1374.3px;top:517.7px;width:1px;height:22.5px;background:#f5f5f7;"></div>
<div class="b" style="left:1517.5px;top:517.7px;width:1px;height:22.5px;background:#f5f5f7;"></div>
<div class="t" style="left:291.5px;top:520.3000000000001px;font-size:14px;color:#ffffff;letter-spacing:-0.15px">近灯柱CE1453</div>
<div class="t" style="left:555.5px;top:520.3000000000001px;font-size:14px;color:#1a1a1a;letter-spacing:0.2px">SC02-S-1100-0</div>
<div class="t" style="left:697px;top:520.3000000000001px;font-size:14px;color:#1a1a1a;transform:scaleX(0.942);transform-origin:0 0">MA LIU SHUI PUBLIC PIER</div>
<div class="t" style="left:866.5px;top:520.3000000000001px;width:79px;overflow:hidden;font-size:13.4px;color:#1a1a1a">馬料水公眾碼頭</div>
<div class="t" style="left:949px;top:520.3000000000001px;font-size:14px;color:#1a1a1a;letter-spacing:-0.5px">马料水公众码头</div>
<div class="t" style="left:1051px;top:520.3000000000001px;font-size:14px;color:#1a1a1a;">07</div>
<div class="t" style="left:1129.5px;top:520.3000000000001px;font-size:14px;color:#1a1a1a;">01</div>
<div class="t" style="left:1241px;top:520.3000000000001px;font-size:14px;color:#1a1a1a;letter-spacing:0.35px">22.4160270000</div>
<div class="t" style="left:1376px;top:520.3000000000001px;font-size:14px;color:#1a1a1a;letter-spacing:0.35px">114.2139450000</div>
<div class="b" style="left:277px;top:540.2px;width:13px;height:22.5px;background:#e6f0fa;"></div>
<div class="b" style="left:290px;top:540.2px;width:147.5px;height:22.5px;background:#7fc0f4;"></div>
<div class="b" style="left:290px;top:540.2px;width:147.5px;height:21.5px;background:#0b6cd4;"></div>
<div class="b" style="left:437.5px;top:561.7px;width:1080px;height:1px;background:#f3f3f5;"></div>
<div class="b" style="left:553.3px;top:540.2px;width:1px;height:22.5px;background:#f5f5f7;"></div>
<div class="b" style="left:694px;top:540.2px;width:1px;height:22.5px;background:#f5f5f7;"></div>
<div class="b" style="left:864.4px;top:540.2px;width:1px;height:22.5px;background:#f5f5f7;"></div>
<div class="b" style="left:946.8px;top:540.2px;width:1px;height:22.5px;background:#f5f5f7;"></div>
<div class="b" style="left:1048.6px;top:540.2px;width:1px;height:22.5px;background:#f5f5f7;"></div>
<div class="b" style="left:1127.4px;top:540.2px;width:1px;height:22.5px;background:#f5f5f7;"></div>
<div class="b" style="left:1239.3px;top:540.2px;width:1px;height:22.5px;background:#f5f5f7;"></div>
<div class="b" style="left:1374.3px;top:540.2px;width:1px;height:22.5px;background:#f5f5f7;"></div>
<div class="b" style="left:1517.5px;top:540.2px;width:1px;height:22.5px;background:#f5f5f7;"></div>
<div class="t" style="left:291.5px;top:542.8000000000001px;font-size:14px;color:#ffffff;letter-spacing:-0.15px">近灯柱CE1453</div>
<div class="t" style="left:555.5px;top:542.8000000000001px;font-size:14px;color:#1a1a1a;letter-spacing:0.2px">SC02-S-1100-0</div>
<div class="t" style="left:697px;top:542.8000000000001px;font-size:14px;color:#1a1a1a;transform:scaleX(0.942);transform-origin:0 0">MA LIU SHUI PUBLIC PIER</div>
<div class="t" style="left:866.5px;top:542.8000000000001px;width:79px;overflow:hidden;font-size:13.4px;color:#1a1a1a">馬料水公眾碼頭</div>
<div class="t" style="left:949px;top:542.8000000000001px;font-size:14px;color:#1a1a1a;letter-spacing:-0.5px">马料水公众码头</div>
<div class="t" style="left:1051px;top:542.8000000000001px;font-size:14px;color:#1a1a1a;">07</div>
<div class="t" style="left:1129.5px;top:542.8000000000001px;font-size:14px;color:#1a1a1a;">01</div>
<div class="t" style="left:1241px;top:542.8000000000001px;font-size:14px;color:#1a1a1a;letter-spacing:0.35px">22.4160270000</div>
<div class="t" style="left:1376px;top:542.8000000000001px;font-size:14px;color:#1a1a1a;letter-spacing:0.35px">114.2139450000</div>
<div class="b" style="left:437.5px;top:562.7px;width:1080px;height:22.5px;background:#f3f8fd;"></div>
<div class="b" style="left:277px;top:562.7px;width:13px;height:22.5px;background:#e6f0fa;"></div>
<div class="b" style="left:290px;top:562.7px;width:147.5px;height:22.5px;background:#7fc0f4;"></div>
<div class="b" style="left:290px;top:562.7px;width:147.5px;height:21.5px;background:#0b6cd4;"></div>
<div class="b" style="left:437.5px;top:584.2px;width:1080px;height:1px;background:#f3f3f5;"></div>
<div class="b" style="left:553.3px;top:562.7px;width:1px;height:22.5px;background:#f5f5f7;"></div>
<div class="b" style="left:694px;top:562.7px;width:1px;height:22.5px;background:#f5f5f7;"></div>
<div class="b" style="left:864.4px;top:562.7px;width:1px;height:22.5px;background:#f5f5f7;"></div>
<div class="b" style="left:946.8px;top:562.7px;width:1px;height:22.5px;background:#f5f5f7;"></div>
<div class="b" style="left:1048.6px;top:562.7px;width:1px;height:22.5px;background:#f5f5f7;"></div>
<div class="b" style="left:1127.4px;top:562.7px;width:1px;height:22.5px;background:#f5f5f7;"></div>
<div class="b" style="left:1239.3px;top:562.7px;width:1px;height:22.5px;background:#f5f5f7;"></div>
<div class="b" style="left:1374.3px;top:562.7px;width:1px;height:22.5px;background:#f5f5f7;"></div>
<div class="b" style="left:1517.5px;top:562.7px;width:1px;height:22.5px;background:#f5f5f7;"></div>
<div class="t" style="left:291.5px;top:565.3000000000001px;font-size:14px;color:#ffffff;letter-spacing:-0.15px">近灯柱CE1453</div>
<div class="t" style="left:555.5px;top:565.3000000000001px;font-size:14px;color:#1a1a1a;letter-spacing:0.2px">SC02-S-1100-0</div>
<div class="t" style="left:697px;top:565.3000000000001px;font-size:14px;color:#1a1a1a;transform:scaleX(0.942);transform-origin:0 0">MA LIU SHUI PUBLIC PIER</div>
<div class="t" style="left:866.5px;top:565.3000000000001px;width:79px;overflow:hidden;font-size:13.4px;color:#1a1a1a">馬料水公眾碼頭</div>
<div class="t" style="left:949px;top:565.3000000000001px;font-size:14px;color:#1a1a1a;letter-spacing:-0.5px">马料水公众码头</div>
<div class="t" style="left:1051px;top:565.3000000000001px;font-size:14px;color:#1a1a1a;">07</div>
<div class="t" style="left:1129.5px;top:565.3000000000001px;font-size:14px;color:#1a1a1a;">02</div>
<div class="t" style="left:1241px;top:565.3000000000001px;font-size:14px;color:#1a1a1a;letter-spacing:0.35px">22.4160270000</div>
<div class="t" style="left:1376px;top:565.3000000000001px;font-size:14px;color:#1a1a1a;letter-spacing:0.35px">114.2139450000</div>
<div class="b" style="left:277px;top:585.2px;width:13px;height:22.5px;background:#e6f0fa;"></div>
<div class="b" style="left:290px;top:585.2px;width:147.5px;height:22.5px;background:#7fc0f4;"></div>
<div class="b" style="left:290px;top:585.2px;width:147.5px;height:21.5px;background:#0b6cd4;"></div>
<div class="b" style="left:437.5px;top:606.7px;width:1080px;height:1px;background:#f3f3f5;"></div>
<div class="b" style="left:553.3px;top:585.2px;width:1px;height:22.5px;background:#f5f5f7;"></div>
<div class="b" style="left:694px;top:585.2px;width:1px;height:22.5px;background:#f5f5f7;"></div>
<div class="b" style="left:864.4px;top:585.2px;width:1px;height:22.5px;background:#f5f5f7;"></div>
<div class="b" style="left:946.8px;top:585.2px;width:1px;height:22.5px;background:#f5f5f7;"></div>
<div class="b" style="left:1048.6px;top:585.2px;width:1px;height:22.5px;background:#f5f5f7;"></div>
<div class="b" style="left:1127.4px;top:585.2px;width:1px;height:22.5px;background:#f5f5f7;"></div>
<div class="b" style="left:1239.3px;top:585.2px;width:1px;height:22.5px;background:#f5f5f7;"></div>
<div class="b" style="left:1374.3px;top:585.2px;width:1px;height:22.5px;background:#f5f5f7;"></div>
<div class="b" style="left:1517.5px;top:585.2px;width:1px;height:22.5px;background:#f5f5f7;"></div>
<div class="t" style="left:291.5px;top:587.8000000000001px;font-size:14px;color:#ffffff;letter-spacing:-0.15px">近灯柱CE1453</div>
<div class="t" style="left:555.5px;top:587.8000000000001px;font-size:14px;color:#1a1a1a;letter-spacing:0.2px">SC02-S-1100-0</div>
<div class="t" style="left:697px;top:587.8000000000001px;font-size:14px;color:#1a1a1a;transform:scaleX(0.942);transform-origin:0 0">MA LIU SHUI PUBLIC PIER</div>
<div class="t" style="left:866.5px;top:587.8000000000001px;width:79px;overflow:hidden;font-size:13.4px;color:#1a1a1a">馬料水公眾碼頭</div>
<div class="t" style="left:949px;top:587.8000000000001px;font-size:14px;color:#1a1a1a;letter-spacing:-0.5px">马料水公众码头</div>
<div class="t" style="left:1051px;top:587.8000000000001px;font-size:14px;color:#1a1a1a;">07</div>
<div class="t" style="left:1129.5px;top:587.8000000000001px;font-size:14px;color:#1a1a1a;">01</div>
<div class="t" style="left:1241px;top:587.8000000000001px;font-size:14px;color:#1a1a1a;letter-spacing:0.35px">22.4160270000</div>
<div class="t" style="left:1376px;top:587.8000000000001px;font-size:14px;color:#1a1a1a;letter-spacing:0.35px">114.2139450000</div>
<div class="b" style="left:277px;top:607.7px;width:13px;height:22.5px;background:#e6f0fa;"></div>
<div class="b" style="left:290px;top:607.7px;width:147.5px;height:22.5px;background:#7fc0f4;"></div>
<div class="b" style="left:290px;top:607.7px;width:147.5px;height:21.5px;background:#0b6cd4;"></div>
<div class="b" style="left:437.5px;top:629.2px;width:1080px;height:1px;background:#f3f3f5;"></div>
<div class="b" style="left:553.3px;top:607.7px;width:1px;height:22.5px;background:#f5f5f7;"></div>
<div class="b" style="left:694px;top:607.7px;width:1px;height:22.5px;background:#f5f5f7;"></div>
<div class="b" style="left:864.4px;top:607.7px;width:1px;height:22.5px;background:#f5f5f7;"></div>
<div class="b" style="left:946.8px;top:607.7px;width:1px;height:22.5px;background:#f5f5f7;"></div>
<div class="b" style="left:1048.6px;top:607.7px;width:1px;height:22.5px;background:#f5f5f7;"></div>
<div class="b" style="left:1127.4px;top:607.7px;width:1px;height:22.5px;background:#f5f5f7;"></div>
<div class="b" style="left:1239.3px;top:607.7px;width:1px;height:22.5px;background:#f5f5f7;"></div>
<div class="b" style="left:1374.3px;top:607.7px;width:1px;height:22.5px;background:#f5f5f7;"></div>
<div class="b" style="left:1517.5px;top:607.7px;width:1px;height:22.5px;background:#f5f5f7;"></div>
<div class="t" style="left:291.5px;top:610.3000000000001px;font-size:14px;color:#ffffff;letter-spacing:-0.15px">近灯柱CE1453</div>
<div class="t" style="left:555.5px;top:610.3000000000001px;font-size:14px;color:#1a1a1a;letter-spacing:0.2px">SC02-S-1100-0</div>
<div class="t" style="left:697px;top:610.3000000000001px;font-size:14px;color:#1a1a1a;transform:scaleX(0.942);transform-origin:0 0">MA LIU SHUI PUBLIC PIER</div>
<div class="t" style="left:866.5px;top:610.3000000000001px;width:79px;overflow:hidden;font-size:13.4px;color:#1a1a1a">馬料水公眾碼頭</div>
<div class="t" style="left:949px;top:610.3000000000001px;font-size:14px;color:#1a1a1a;letter-spacing:-0.5px">马料水公众码头</div>
<div class="t" style="left:1051px;top:610.3000000000001px;font-size:14px;color:#1a1a1a;">07</div>
<div class="t" style="left:1129.5px;top:610.3000000000001px;font-size:14px;color:#1a1a1a;">01</div>
<div class="t" style="left:1241px;top:610.3000000000001px;font-size:14px;color:#1a1a1a;letter-spacing:0.35px">22.4160270000</div>
<div class="t" style="left:1376px;top:610.3000000000001px;font-size:14px;color:#1a1a1a;letter-spacing:0.35px">114.2139450000</div>
<div class="b" style="left:437.5px;top:630.2px;width:1080px;height:22.5px;background:#f6f6f8;"></div>
<div class="b" style="left:277px;top:630.2px;width:13px;height:22.5px;background:#e6f0fa;"></div>
<div class="b" style="left:290px;top:630.2px;width:147.5px;height:22.5px;background:#7fc0f4;"></div>
<div class="b" style="left:290px;top:630.2px;width:147.5px;height:21.5px;background:#0b6cd4;"></div>
<div class="b" style="left:437.5px;top:651.7px;width:1080px;height:1px;background:#f3f3f5;"></div>
<div class="b" style="left:553.3px;top:630.2px;width:1px;height:22.5px;background:#f5f5f7;"></div>
<div class="b" style="left:694px;top:630.2px;width:1px;height:22.5px;background:#f5f5f7;"></div>
<div class="b" style="left:864.4px;top:630.2px;width:1px;height:22.5px;background:#f5f5f7;"></div>
<div class="b" style="left:946.8px;top:630.2px;width:1px;height:22.5px;background:#f5f5f7;"></div>
<div class="b" style="left:1048.6px;top:630.2px;width:1px;height:22.5px;background:#f5f5f7;"></div>
<div class="b" style="left:1127.4px;top:630.2px;width:1px;height:22.5px;background:#f5f5f7;"></div>
<div class="b" style="left:1239.3px;top:630.2px;width:1px;height:22.5px;background:#f5f5f7;"></div>
<div class="b" style="left:1374.3px;top:630.2px;width:1px;height:22.5px;background:#f5f5f7;"></div>
<div class="b" style="left:1517.5px;top:630.2px;width:1px;height:22.5px;background:#f5f5f7;"></div>
<div class="t" style="left:291.5px;top:632.8000000000001px;font-size:14px;color:#ffffff;letter-spacing:-0.15px">近灯柱CE1453</div>
<div class="t" style="left:555.5px;top:632.8000000000001px;font-size:14px;color:#1a1a1a;letter-spacing:0.2px">SC02-S-1100-0</div>
<div class="t" style="left:697px;top:632.8000000000001px;font-size:14px;color:#1a1a1a;transform:scaleX(0.942);transform-origin:0 0">MA LIU SHUI PUBLIC PIER</div>
<div class="t" style="left:866.5px;top:632.8000000000001px;width:79px;overflow:hidden;font-size:13.4px;color:#1a1a1a">馬料水公眾碼頭</div>
<div class="t" style="left:949px;top:632.8000000000001px;font-size:14px;color:#1a1a1a;letter-spacing:-0.5px">马料水公众码头</div>
<div class="t" style="left:1051px;top:632.8000000000001px;font-size:14px;color:#1a1a1a;">07</div>
<div class="t" style="left:1129.5px;top:632.8000000000001px;font-size:14px;color:#1a1a1a;">01</div>
<div class="t" style="left:1241px;top:632.8000000000001px;font-size:14px;color:#1a1a1a;letter-spacing:0.35px">22.4160270000</div>
<div class="t" style="left:1376px;top:632.8000000000001px;font-size:14px;color:#1a1a1a;letter-spacing:0.35px">114.2139450000</div>
<div class="b" style="left:277px;top:652.7px;width:13px;height:22.5px;background:#e6f0fa;"></div>
<div class="b" style="left:290px;top:652.7px;width:147.5px;height:22.5px;background:#7fc0f4;"></div>
<div class="b" style="left:290px;top:652.7px;width:147.5px;height:21.5px;background:#0b6cd4;"></div>
<div class="b" style="left:437.5px;top:674.2px;width:1080px;height:1px;background:#f3f3f5;"></div>
<div class="b" style="left:553.3px;top:652.7px;width:1px;height:22.5px;background:#f5f5f7;"></div>
<div class="b" style="left:694px;top:652.7px;width:1px;height:22.5px;background:#f5f5f7;"></div>
<div class="b" style="left:864.4px;top:652.7px;width:1px;height:22.5px;background:#f5f5f7;"></div>
<div class="b" style="left:946.8px;top:652.7px;width:1px;height:22.5px;background:#f5f5f7;"></div>
<div class="b" style="left:1048.6px;top:652.7px;width:1px;height:22.5px;background:#f5f5f7;"></div>
<div class="b" style="left:1127.4px;top:652.7px;width:1px;height:22.5px;background:#f5f5f7;"></div>
<div class="b" style="left:1239.3px;top:652.7px;width:1px;height:22.5px;background:#f5f5f7;"></div>
<div class="b" style="left:1374.3px;top:652.7px;width:1px;height:22.5px;background:#f5f5f7;"></div>
<div class="b" style="left:1517.5px;top:652.7px;width:1px;height:22.5px;background:#f5f5f7;"></div>
<div class="t" style="left:291.5px;top:655.3000000000001px;font-size:14px;color:#ffffff;letter-spacing:-0.15px">近灯柱CE1453</div>
<div class="t" style="left:555.5px;top:655.3000000000001px;font-size:14px;color:#1a1a1a;letter-spacing:0.2px">SC02-S-1100-0</div>
<div class="t" style="left:697px;top:655.3000000000001px;font-size:14px;color:#1a1a1a;transform:scaleX(0.942);transform-origin:0 0">MA LIU SHUI PUBLIC PIER</div>
<div class="t" style="left:866.5px;top:655.3000000000001px;width:79px;overflow:hidden;font-size:13.4px;color:#1a1a1a">馬料水公眾碼頭</div>
<div class="t" style="left:949px;top:655.3000000000001px;font-size:14px;color:#1a1a1a;letter-spacing:-0.5px">马料水公众码头</div>
<div class="t" style="left:1051px;top:655.3000000000001px;font-size:14px;color:#1a1a1a;">07</div>
<div class="t" style="left:1129.5px;top:655.3000000000001px;font-size:14px;color:#1a1a1a;">01</div>
<div class="t" style="left:1241px;top:655.3000000000001px;font-size:14px;color:#1a1a1a;letter-spacing:0.35px">22.4160270000</div>
<div class="t" style="left:1376px;top:655.3000000000001px;font-size:14px;color:#1a1a1a;letter-spacing:0.35px">114.2139450000</div>
<div class="b" style="left:277px;top:675.2px;width:13px;height:22.5px;background:#e6f0fa;"></div>
<div class="b" style="left:290px;top:675.2px;width:147.5px;height:22.5px;background:#7fc0f4;"></div>
<div class="b" style="left:290px;top:675.2px;width:147.5px;height:21.5px;background:#0b6cd4;"></div>
<div class="b" style="left:437.5px;top:696.7px;width:1080px;height:1px;background:#f3f3f5;"></div>
<div class="b" style="left:553.3px;top:675.2px;width:1px;height:22.5px;background:#f5f5f7;"></div>
<div class="b" style="left:694px;top:675.2px;width:1px;height:22.5px;background:#f5f5f7;"></div>
<div class="b" style="left:864.4px;top:675.2px;width:1px;height:22.5px;background:#f5f5f7;"></div>
<div class="b" style="left:946.8px;top:675.2px;width:1px;height:22.5px;background:#f5f5f7;"></div>
<div class="b" style="left:1048.6px;top:675.2px;width:1px;height:22.5px;background:#f5f5f7;"></div>
<div class="b" style="left:1127.4px;top:675.2px;width:1px;height:22.5px;background:#f5f5f7;"></div>
<div class="b" style="left:1239.3px;top:675.2px;width:1px;height:22.5px;background:#f5f5f7;"></div>
<div class="b" style="left:1374.3px;top:675.2px;width:1px;height:22.5px;background:#f5f5f7;"></div>
<div class="b" style="left:1517.5px;top:675.2px;width:1px;height:22.5px;background:#f5f5f7;"></div>
<div class="t" style="left:291.5px;top:677.8000000000001px;font-size:14px;color:#ffffff;letter-spacing:-0.15px">近灯柱CE1453</div>
<div class="t" style="left:555.5px;top:677.8000000000001px;font-size:14px;color:#1a1a1a;letter-spacing:0.2px">SC02-S-1100-0</div>
<div class="t" style="left:697px;top:677.8000000000001px;font-size:14px;color:#1a1a1a;transform:scaleX(0.942);transform-origin:0 0">MA LIU SHUI PUBLIC PIER</div>
<div class="t" style="left:866.5px;top:677.8000000000001px;width:79px;overflow:hidden;font-size:13.4px;color:#1a1a1a">馬料水公眾碼頭</div>
<div class="t" style="left:949px;top:677.8000000000001px;font-size:14px;color:#1a1a1a;letter-spacing:-0.5px">马料水公众码头</div>
<div class="t" style="left:1051px;top:677.8000000000001px;font-size:14px;color:#1a1a1a;">07</div>
<div class="t" style="left:1129.5px;top:677.8000000000001px;font-size:14px;color:#1a1a1a;">01</div>
<div class="t" style="left:1241px;top:677.8000000000001px;font-size:14px;color:#1a1a1a;letter-spacing:0.35px">22.4160270000</div>
<div class="t" style="left:1376px;top:677.8000000000001px;font-size:14px;color:#1a1a1a;letter-spacing:0.35px">114.2139450000</div>
<div class="b" style="left:437.5px;top:697.7px;width:1080px;height:22.5px;background:#f3f8fd;"></div>
<div class="b" style="left:277px;top:697.7px;width:13px;height:22.5px;background:#e6f0fa;"></div>
<div class="b" style="left:290px;top:697.7px;width:147.5px;height:22.5px;background:#7fc0f4;"></div>
<div class="b" style="left:290px;top:697.7px;width:147.5px;height:21.5px;background:#0b6cd4;"></div>
<div class="b" style="left:437.5px;top:719.2px;width:1080px;height:1px;background:#f3f3f5;"></div>
<div class="b" style="left:553.3px;top:697.7px;width:1px;height:22.5px;background:#f5f5f7;"></div>
<div class="b" style="left:694px;top:697.7px;width:1px;height:22.5px;background:#f5f5f7;"></div>
<div class="b" style="left:864.4px;top:697.7px;width:1px;height:22.5px;background:#f5f5f7;"></div>
<div class="b" style="left:946.8px;top:697.7px;width:1px;height:22.5px;background:#f5f5f7;"></div>
<div class="b" style="left:1048.6px;top:697.7px;width:1px;height:22.5px;background:#f5f5f7;"></div>
<div class="b" style="left:1127.4px;top:697.7px;width:1px;height:22.5px;background:#f5f5f7;"></div>
<div class="b" style="left:1239.3px;top:697.7px;width:1px;height:22.5px;background:#f5f5f7;"></div>
<div class="b" style="left:1374.3px;top:697.7px;width:1px;height:22.5px;background:#f5f5f7;"></div>
<div class="b" style="left:1517.5px;top:697.7px;width:1px;height:22.5px;background:#f5f5f7;"></div>
<div class="t" style="left:291.5px;top:700.3000000000001px;font-size:14px;color:#ffffff;letter-spacing:-0.15px">近灯柱CE1453</div>
<div class="t" style="left:555.5px;top:700.3000000000001px;font-size:14px;color:#1a1a1a;letter-spacing:0.2px">SC02-S-1200-2</div>
<div class="t" style="left:697px;top:700.3000000000001px;font-size:14px;color:#1a1a1a;transform:scaleX(0.942);transform-origin:0 0">MA LIU SHUI PUBLIC PIER</div>
<div class="t" style="left:866.5px;top:700.3000000000001px;width:79px;overflow:hidden;font-size:13.4px;color:#1a1a1a">馬料水公眾碼頭</div>
<div class="t" style="left:949px;top:700.3000000000001px;font-size:14px;color:#1a1a1a;letter-spacing:-0.5px">马料水公众码头</div>
<div class="t" style="left:1051px;top:700.3000000000001px;font-size:14px;color:#1a1a1a;">07</div>
<div class="t" style="left:1129.5px;top:700.3000000000001px;font-size:14px;color:#1a1a1a;">02</div>
<div class="t" style="left:1241px;top:700.3000000000001px;font-size:14px;color:#1a1a1a;letter-spacing:0.35px">22.4160270000</div>
<div class="t" style="left:1376px;top:700.3000000000001px;font-size:14px;color:#1a1a1a;letter-spacing:0.35px">114.2139450000</div>
<div class="b" style="left:277px;top:720.2px;width:13px;height:22.5px;background:#e6f0fa;"></div>
<div class="b" style="left:290px;top:720.2px;width:147.5px;height:22.5px;background:#7fc0f4;"></div>
<div class="b" style="left:290px;top:720.2px;width:147.5px;height:21.5px;background:#0b6cd4;"></div>
<div class="b" style="left:437.5px;top:741.7px;width:1080px;height:1px;background:#f3f3f5;"></div>
<div class="b" style="left:553.3px;top:720.2px;width:1px;height:22.5px;background:#f5f5f7;"></div>
<div class="b" style="left:694px;top:720.2px;width:1px;height:22.5px;background:#f5f5f7;"></div>
<div class="b" style="left:864.4px;top:720.2px;width:1px;height:22.5px;background:#f5f5f7;"></div>
<div class="b" style="left:946.8px;top:720.2px;width:1px;height:22.5px;background:#f5f5f7;"></div>
<div class="b" style="left:1048.6px;top:720.2px;width:1px;height:22.5px;background:#f5f5f7;"></div>
<div class="b" style="left:1127.4px;top:720.2px;width:1px;height:22.5px;background:#f5f5f7;"></div>
<div class="b" style="left:1239.3px;top:720.2px;width:1px;height:22.5px;background:#f5f5f7;"></div>
<div class="b" style="left:1374.3px;top:720.2px;width:1px;height:22.5px;background:#f5f5f7;"></div>
<div class="b" style="left:1517.5px;top:720.2px;width:1px;height:22.5px;background:#f5f5f7;"></div>
<div class="t" style="left:291.5px;top:722.8000000000001px;font-size:14px;color:#ffffff;letter-spacing:-0.15px">近灯柱CE1453</div>
<div class="t" style="left:555.5px;top:722.8000000000001px;font-size:14px;color:#1a1a1a;letter-spacing:0.2px">SC02-S-1100-0</div>
<div class="t" style="left:697px;top:722.8000000000001px;font-size:14px;color:#1a1a1a;transform:scaleX(0.942);transform-origin:0 0">MA LIU SHUI PUBLIC PIER</div>
<div class="t" style="left:866.5px;top:722.8000000000001px;width:79px;overflow:hidden;font-size:13.4px;color:#1a1a1a">馬料水公眾碼頭</div>
<div class="t" style="left:949px;top:722.8000000000001px;font-size:14px;color:#1a1a1a;letter-spacing:-0.5px">马料水公众码头</div>
<div class="t" style="left:1051px;top:722.8000000000001px;font-size:14px;color:#1a1a1a;">07</div>
<div class="t" style="left:1129.5px;top:722.8000000000001px;font-size:14px;color:#1a1a1a;">01</div>
<div class="t" style="left:1241px;top:722.8000000000001px;font-size:14px;color:#1a1a1a;letter-spacing:0.35px">22.4160270000</div>
<div class="t" style="left:1376px;top:722.8000000000001px;font-size:14px;color:#1a1a1a;letter-spacing:0.35px">114.2139450000</div>
<svg class="b" style="left:281px;top:319.5px" width="7" height="12" viewBox="0 0 7 12"><path d="M0 0l7 6-7 6z" fill="#111"/></svg>
<div class="b" style="left:1625px;top:292.5px;width:17px;height:666.5px;background:#f0eff2;"></div>
<div class="b" style="left:1629px;top:312.5px;width:8px;height:322.5px;background:#8b8a8e;border-radius:1px"></div>
<div class="b" style="left:277px;top:959px;width:1368px;height:43px;background:#f0eff2;"></div>
<div class="b" style="left:1018.5px;top:964.6px;width:585px;height:8px;background:#8b8a8e;border-radius:1px"></div>
<svg class="b" style="left:283px;top:983px" width="12" height="12" viewBox="0 0 12 12"><path d="M0 6h12M6 0v12" stroke="#555" stroke-width="2.2"/></svg>
<svg class="b" style="left:304px;top:983px" width="12" height="12" viewBox="0 0 12 12"><path d="M0 6h12" stroke="#555" stroke-width="2.2"/></svg>
<svg class="b" style="left:325px;top:983px" width="13" height="12" viewBox="0 0 13 12"><path d="M1 6.5l3.5 3.5 7.5-8" stroke="#c5c5c7" stroke-width="1.8" fill="none"/></svg>
<svg class="b" style="left:348px;top:983px" width="11" height="12" viewBox="0 0 11 12"><path d="M1 1.5l9 9M10 1.5l-9 9" stroke="#c5c5c7" stroke-width="1.6"/></svg>
<svg class="b" style="left:369.5px;top:982.5px" width="12" height="13" viewBox="0 0 12 13"><path d="M10.3 4.5A5 5 0 1 0 10.5 8.5" stroke="#555" stroke-width="2" fill="none"/><path d="M11.5 1v4.5H7z" fill="#555"/></svg>
<div class="b" style="left:392px;top:983.5px;width:11px;height:11px;background:#c3c3c5;"></div>
<svg class="b" style="left:1426px;top:984px" width="15" height="11" viewBox="0 0 15 11"><path d="M1.2 0v11" stroke="#555" stroke-width="2"/><path d="M14 5.5H5M8.5 1.5l-4 4 4 4" stroke="#555" stroke-width="2" fill="none"/></svg>
<svg class="b" style="left:1453px;top:984px" width="14" height="11" viewBox="0 0 14 11"><path d="M14 5.5H3M6.5 1.5l-4 4 4 4" stroke="#555" stroke-width="2" fill="none"/></svg>
<div class="b" style="left:1472px;top:981px;width:26px;height:20px;background:#ffffff;"></div>
<div class="t" style="left:1481px;top:982.5px;font-size:14px;color:#1a1a1a;">1</div>
<svg class="b" style="left:1505px;top:984px" width="14" height="11" viewBox="0 0 14 11"><path d="M0 5.5h11M7.5 1.5l4 4-4 4" stroke="#555" stroke-width="2" fill="none"/></svg>
<svg class="b" style="left:1531px;top:984px" width="15" height="11" viewBox="0 0 15 11"><path d="M13.8 0v11" stroke="#555" stroke-width="2"/><path d="M1 5.5h9M6.5 1.5l4 4-4 4" stroke="#555" stroke-width="2" fill="none"/></svg>
<svg class="b" style="left:1557px;top:982.5px" width="15" height="15" viewBox="0 0 15 15"><circle cx="7.5" cy="7.5" r="4.2" fill="none" stroke="#555" stroke-width="2.2"/><path d="M7.5 0v3M7.5 12v3M0 7.5h3M12 7.5h3M2.2 2.2l2.1 2.1M10.7 10.7l2.1 2.1M2.2 12.8l2.1-2.1M10.7 4.3l2.1-2.1" stroke="#555" stroke-width="2"/></svg>
<div class="b" style="left:1582px;top:980px;width:1px;height:20px;background:#dcdcde;"></div>
<div class="b" style="left:1590px;top:978px;width:26px;height:23px;background:#cfe3f6;box-shadow:inset 0 0 0 1px #bcd8f2"></div>
<svg class="b" style="left:1595px;top:981.5px" width="17" height="16" viewBox="0 0 17 16"><rect x=".5" y=".5" width="16" height="15" fill="none" stroke="#555"/><path d="M.5 5h16M.5 10h16M6 .5v15M11 .5v15" stroke="#555"/></svg>
<svg class="b" style="left:1621px;top:981.5px" width="17" height="16" viewBox="0 0 17 16"><rect x=".5" y=".5" width="16" height="15" fill="none" stroke="#555"/><path d="M.5 3.5h16" stroke="#555"/><rect x="4" y="6" width="9" height="2.5" fill="none" stroke="#555" stroke-width=".8"/><rect x="4" y="10" width="9" height="2.5" fill="none" stroke="#555" stroke-width=".8"/></svg>
<div class="b" style="left:0px;top:1001.7px;width:1920px;height:1px;background:#dedde2;"></div>
<div class="b" style="left:0px;top:1002.7px;width:1920px;height:23.3px;background:#f0f0f2;"></div>
<div class="b" style="left:277px;top:1003px;width:1px;height:22px;background:#e2e2e4;"></div>
<div class="t" style="left:283px;top:1007px;font-size:13.5px;color:#1a1a1a;">已选择 1 列</div>
<div class="b" style="left:1511px;top:1003px;width:1px;height:22px;background:#e2e2e4;"></div>
<div class="b" style="left:1587px;top:1003px;width:1px;height:22px;background:#e2e2e4;"></div>
<div class="t" style="left:1590px;top:1007px;font-size:13.5px;color:#1a1a1a;">第 1 条记录（共 19 条）于第 1 页</div>
<div class="b" style="left:1862px;top:1003px;width:28px;height:22px;background:#cde3f6;"></div>
<div class="b" style="left:1890px;top:1003px;width:23px;height:22px;background:#cde3f6;"></div>
<svg class="b" style="left:1868px;top:1007px" width="16" height="14" viewBox="0 0 16 14"><rect x=".6" y=".6" width="14.8" height="12.8" fill="none" stroke="#333" stroke-width="1.2"/><rect x="1" y="1" width="4" height="12" fill="#333"/></svg>
<svg class="b" style="left:1894px;top:1007px" width="16" height="14" viewBox="0 0 16 14"><rect x=".6" y=".6" width="14.8" height="12.8" fill="none" stroke="#333" stroke-width="1.2"/><rect x="11" y="1" width="4" height="12" fill="#333"/></svg>
<div class="b" style="left:1642px;top:123.6px;width:4px;height:878.4px;background:#f0eff2;"></div>
<div class="b" style="left:1646px;top:123.6px;width:274px;height:878.4px;background:#ffffff;"></div>
<svg class="b" style="left:1747px;top:129.5px" width="16.5" height="16.5" viewBox="0 0 16.5 16.5"><circle cx="8.25" cy="8.25" r="7.4" fill="none" stroke="#444" stroke-width="1.2"/><circle cx="8.25" cy="4.8" r="1.1" fill="#444"/><path d="M8.25 7v5.5" stroke="#444" stroke-width="1.8"/></svg>
<svg class="b" style="left:1775px;top:129.5px" width="16.5" height="16.5" viewBox="0 0 16.5 16.5"><rect x=".6" y=".6" width="15.3" height="15.3" fill="none" stroke="#555" stroke-width="1.1"/><text x="8.25" y="10.5" font-size="5.5" font-family="Liberation Sans" font-weight="bold" text-anchor="middle" fill="#555">DDL</text></svg>
<svg class="b" style="left:1802px;top:128px" width="18" height="18" viewBox="0 0 18 18"><rect x="0" y="0" width="18" height="18" rx="1" fill="#1e7fe0"/><rect x="2" y="2" width="5.5" height="3.6" fill="#fff"/><rect x="10.5" y="2" width="5.5" height="3.6" fill="#fff"/><rect x="2" y="7.2" width="5.5" height="3.6" fill="#fff"/><rect x="10.5" y="7.2" width="5.5" height="3.6" fill="#fff"/><rect x="2" y="12.4" width="5.5" height="3.6" fill="#fff"/><rect x="10.5" y="12.4" width="5.5" height="3.6" fill="#fff"/></svg>
<svg class="b" style="left:1664px;top:165px" width="18" height="18" viewBox="0 0 18 18"><rect x="0" y="0" width="18" height="18" fill="#e4e4e6"/><rect x="6" y="0" width="6" height="18" fill="#3a98ea"/><rect x="0" y="0" width="18" height="4" fill="#fff" fill-opacity=".35"/></svg>
<div class="t" style="left:1691.5px;top:166px;font-size:14.8px;color:#3a3a3a;font-weight:bold">stop_loc_cn2</div>
<div class="t" style="left:1663.5px;top:197.8px;font-size:16px;color:#808080;">类型</div>
<div class="t" style="left:1663.5px;top:220px;font-size:14px;color:#404040;">varchar(128)</div>
<div class="t" style="left:1663.5px;top:249px;font-size:16px;color:#808080;word-spacing:1px">不是 null</div>
<div class="t" style="left:1663.5px;top:271.5px;font-size:14px;color:#404040;">否</div>
<div class="t" style="left:1663.5px;top:301.5px;font-size:16px;color:#808080;">默认值</div>
<div class="t" style="left:1663.5px;top:323.5px;font-size:14px;color:#404040;">(NULL)</div>
<div class="t" style="left:1663.5px;top:353.2px;font-size:16px;color:#808080;">注释</div>
<div class="t" style="left:1664px;top:376px;font-size:14px;color:#404040;">--</div>
<div class="b" style="left:0px;top:1026px;width:1920px;height:54px;background:linear-gradient(90deg,#d5dce8,#dde2ec 50%,#d6dde9);"></div>
<div class="b" style="left:0px;top:1026px;width:1920px;height:1px;background:#c9ced8;"></div>
<svg class="b" style="left:25px;top:1043px" width="22" height="22" viewBox="0 0 22 22"><circle cx="11" cy="11" r="11" fill="url(#sun)"/></svg>
<div class="t" style="left:58px;top:1039px;font-size:12.5px;color:#1a1a1a;">10°C</div>
<div class="t" style="left:58px;top:1056.5px;font-size:12.5px;color:#444;">晴朗</div>
<svg class="b" style="left:591px;top:1041px" width="26" height="26" viewBox="0 0 26 26"><rect x="0" y="0" width="12.4" height="12.4" rx="1" fill="#1e8fe1"/><rect x="13.6" y="0" width="12.4" height="12.4" rx="1" fill="#3aa9f0"/><rect x="0" y="13.6" width="12.4" height="12.4" rx="1" fill="#1785dc"/><rect x="13.6" y="13.6" width="12.4" height="12.4" rx="1" fill="#2a9ae8"/></svg>
<div class="b" style="left:634.5px;top:1038px;width:109.5px;height:32px;background:#f4f6fa;border-radius:16px;box-shadow:0 0 0 1px #e3e7ee"></div>
<svg class="b" style="left:666px;top:1046px" width="15" height="16" viewBox="0 0 15 16"><circle cx="9" cy="6" r="4.8" fill="none" stroke="#222" stroke-width="1.6"/><path d="M5.5 9.5L1 14.5" stroke="#222" stroke-width="1.8"/></svg>
<div class="t" style="left:687px;top:1045.5px;font-size:13.5px;color:#1a1a1a;">搜索</div>
<svg class="b" style="left:760px;top:1041px" width="28" height="25" viewBox="0 0 28 25"><rect x="8" y="1" width="19" height="17" rx="2" fill="#f0f0f0" stroke="#ddd"/><rect x="1" y="8" width="19" height="17" rx="2" fill="#1e1e1e"/><rect x="5" y="8" width="15" height="13" fill="#cfcfcf"/></svg>
<svg class="b" style="left:807px;top:1040px" width="28" height="24" viewBox="0 0 28 24"><ellipse cx="11" cy="10" rx="10" ry="8.5" fill="#2dc100"/><path d="M4 15l-1 5 5-3z" fill="#2dc100"/><circle cx="8" cy="8" r="1.3" fill="#fff"/><circle cx="14" cy="8" r="1.3" fill="#fff"/><ellipse cx="20" cy="17" rx="7" ry="6" fill="#e8e8e8"/><circle cx="18" cy="16" r=".9" fill="#888"/><circle cx="22" cy="16" r=".9" fill="#888"/></svg>
<div class="b" style="left:819px;top:1072px;width:8px;height:3px;background:#8a8e96;border-radius:2px"></div>
<svg class="b" style="left:860px;top:1041px" width="24" height="24" viewBox="0 0 24 24"><path d="M2 5h20l-1 17a2 2 0 0 1-2 2H5a2 2 0 0 1-2-2z" fill="#19c07a"/><path d="M7 11c1 3 3 4 5 4s4-1 5-4" stroke="#fff" stroke-width="1.8" fill="none"/></svg>
<svg class="b" style="left:908px;top:1040px" width="28" height="26" viewBox="0 0 28 26"><path d="M1 3a2 2 0 0 1 2-2h7l3 3h12a2 2 0 0 1 2 2v18a2 2 0 0 1-2 2H3a2 2 0 0 1-2-2z" fill="#f5c137"/><rect x="1" y="7" width="26" height="18" rx="1" fill="#fbd35a"/><rect x="7" y="18" width="14" height="7" rx="1.5" fill="#1a75cf"/></svg>
<svg class="b" style="left:957px;top:1040px" width="28" height="28" viewBox="0 0 28 28"><circle cx="14" cy="14" r="13.5" fill="#db4437"/><path d="M14 14L2.3 7.3A13.5 13.5 0 0 1 25.7 7.3z" fill="#db4437"/><path d="M14 14h11.7A13.5 13.5 0 0 1 14 27.5z" fill="#f4c20d"/><path d="M14 14v13.5A13.5 13.5 0 0 1 2.3 7.3z" fill="#0f9d58"/><circle cx="14" cy="14" r="6.3" fill="#fff"/><circle cx="14" cy="14" r="4.8" fill="#4285f4"/></svg>
<svg class="b" style="left:1007px;top:1040px" width="28" height="28" viewBox="0 0 28 28"><circle cx="14" cy="14" r="13.5" fill="#1a8ad8"/><path d="M1 14A13 13 0 0 1 27 12c0 5-4 7-8 7-3 0-4-2-4-3 2 0 4-1 4-3 0-3-3-5-6-5-6 0-11 4-12 6z" fill="#39c56a"/><path d="M8 20c2 4 6 6 10 6" stroke="#fff" stroke-opacity=".35" stroke-width="2" fill="none"/></svg>
<svg class="b" style="left:1057px;top:1040px" width="28" height="28" viewBox="0 0 28 28"><circle cx="14" cy="14" r="13" fill="#fff" stroke="#cfd6e0"/><path d="M5 8l5 12 4-9" stroke="#3a6ec8" stroke-width="2.5" fill="none"/><path d="M22 9a6 6 0 1 0 0 9" stroke="#2aa6d8" stroke-width="2.5" fill="none"/></svg>
<div class="b" style="left:1066px;top:1072px;width:8px;height:3px;background:#8a8e96;border-radius:2px"></div>
<svg class="b" style="left:1109px;top:1042px" width="22" height="24" viewBox="0 0 22 24"><rect x="0" y="0" width="22" height="24" rx="3" fill="#f8f8f8" stroke="#e2e2e2"/><path d="M7 7h8M11 5v6M6 13h10v6H6z" stroke="#999" stroke-width="1.1" fill="none"/></svg>
<div class="b" style="left:1116px;top:1072px;width:8px;height:3px;background:#8a8e96;border-radius:2px"></div>
<svg class="b" style="left:1155px;top:1040px" width="28" height="28" viewBox="0 0 28 28"><rect x="0" y="0" width="28" height="28" rx="4" fill="#1f1d3a"/><path d="M6 21c3-8 8-13 16-15-3 3-5 7-6 12-3 2-6 3-10 3z" fill="#fff"/><circle cx="13" cy="16" r="2.3" fill="#1f1d3a"/></svg>
<div class="b" style="left:1165px;top:1072px;width:8px;height:3px;background:#8a8e96;border-radius:2px"></div>
<div class="b" style="left:1198px;top:1034px;width:41px;height:42px;background:#e9edf4;border-radius:5px"></div>
<svg class="b" style="left:1204px;top:1038px" width="28" height="32" viewBox="0 0 28 32"><g transform="scale(1.55)"><path d="M9 19.6C5 19.6 2.2 16.9 2.2 13.3C2.2 11.3 2.9 9.7 3.9 8.6C3.4 6.5 4.4 4.5 6.3 4.3C7.8 4.2 8.7 5.4 9 6.7C9.3 5.4 10.2 4.2 11.7 4.3C13.6 4.5 14.6 6.5 14.1 8.6C15.1 9.7 15.8 11.3 15.8 13.3C15.8 16.9 13 19.6 9 19.6Z" fill="none" stroke="#e3c15a" stroke-width="1.5"/><path d="M4.2 9.5C5.8 8.3 7.3 7.9 9 7.9S12.2 8.3 13.8 9.5" fill="none" stroke="#e3c15a" stroke-width="1.1"/></g></svg>
<div class="b" style="left:1208px;top:1071.5px;width:20px;height:3px;background:#1a73d9;border-radius:2px"></div>
<svg class="b" style="left:1254px;top:1040px" width="28" height="27" viewBox="0 0 28 27"><rect x="8" y="1" width="19" height="25" rx="2" fill="#21a366"/><path d="M8 9h19M8 17h19M17 1v25" stroke="#107c41" stroke-width="1"/><rect x="1" y="5" width="15" height="17" rx="2" fill="#107c41"/><path d="M5 9l7 9M12 9l-7 9" stroke="#fff" stroke-width="2"/></svg>
<div class="b" style="left:1264px;top:1072px;width:8px;height:3px;background:#8a8e96;border-radius:2px"></div>
<svg class="b" style="left:1303px;top:1042px" width="29" height="22" viewBox="0 0 29 22"><path d="M1 2l5 18h4l4-11 4 11h4l6-18h-5l-3 11-4-11h-4l-4 11-3-11z" fill="#e8322e"/></svg>
<div class="b" style="left:1314px;top:1072px;width:8px;height:3px;background:#8a8e96;border-radius:2px"></div>
<svg class="b" style="left:1623px;top:1048px" width="14" height="8" viewBox="0 0 14 8"><path d="M1 7l6-6 6 6" stroke="#222" stroke-width="1.2" fill="none"/></svg>
<svg class="b" style="left:1647px;top:1046px" width="20" height="13" viewBox="0 0 20 13"><path d="M5 12a4 4 0 0 1-.5-8A5.5 5.5 0 0 1 15 4a4 4 0 0 1 .5 8z" fill="#c8c8c8" stroke="#333" stroke-width="1.1"/></svg>
<div class="t" style="left:1680px;top:1043px;font-size:15px;color:#1a1a1a;">中</div>
<svg class="b" style="left:1715px;top:1045px" width="19" height="15" viewBox="0 0 19 15"><path d="M1 5a12 12 0 0 1 17 0M4 8a8 8 0 0 1 11 0M7 11a4 4 0 0 1 5 0" stroke="#222" stroke-width="1.3" fill="none"/><circle cx="9.5" cy="13.5" r="1.3" fill="#222"/></svg>
<svg class="b" style="left:1742px;top:1044px" width="18" height="16" viewBox="0 0 18 16"><path d="M1 5h3l5-4v14l-5-4H1z" fill="none" stroke="#222" stroke-width="1.1"/><path d="M11 5l5 6M16 5l-5 6" stroke="#222" stroke-width="1.1"/></svg>
<svg class="b" style="left:1769px;top:1044px" width="19" height="16" viewBox="0 0 19 16"><rect x="5" y="5" width="12" height="8" rx="1.5" fill="none" stroke="#222" stroke-width="1.2"/><rect x="7" y="7" width="7" height="4" fill="#222"/><path d="M1 4l4 3M3 1v3" stroke="#222" stroke-width="1.2"/></svg>
<div class="t" style="left:1839px;top:1038px;font-size:12.5px;color:#1a1a1a;">10:12</div>
<div class="t" style="left:1812px;top:1054px;font-size:12.5px;color:#333;">2022/1/9</div>
<svg class="b" style="left:1880px;top:1042.5px" width="19" height="19" viewBox="0 0 19 19"><circle cx="9.5" cy="9.5" r="9.5" fill="#1a73d9"/><text x="9.5" y="13.5" font-size="11" font-family="Liberation Sans" text-anchor="middle" fill="#fff">3</text></svg>
<div class="t" style="left:1705px;top:1048.5px;font-size:20px;color:#ffffff;text-shadow:1px 1px 0 rgba(60,60,60,.55),-0.5px -0.5px 0 rgba(60,60,60,.3);letter-spacing:-0.45px">CSDN @五五二二9524</div></body></html>
